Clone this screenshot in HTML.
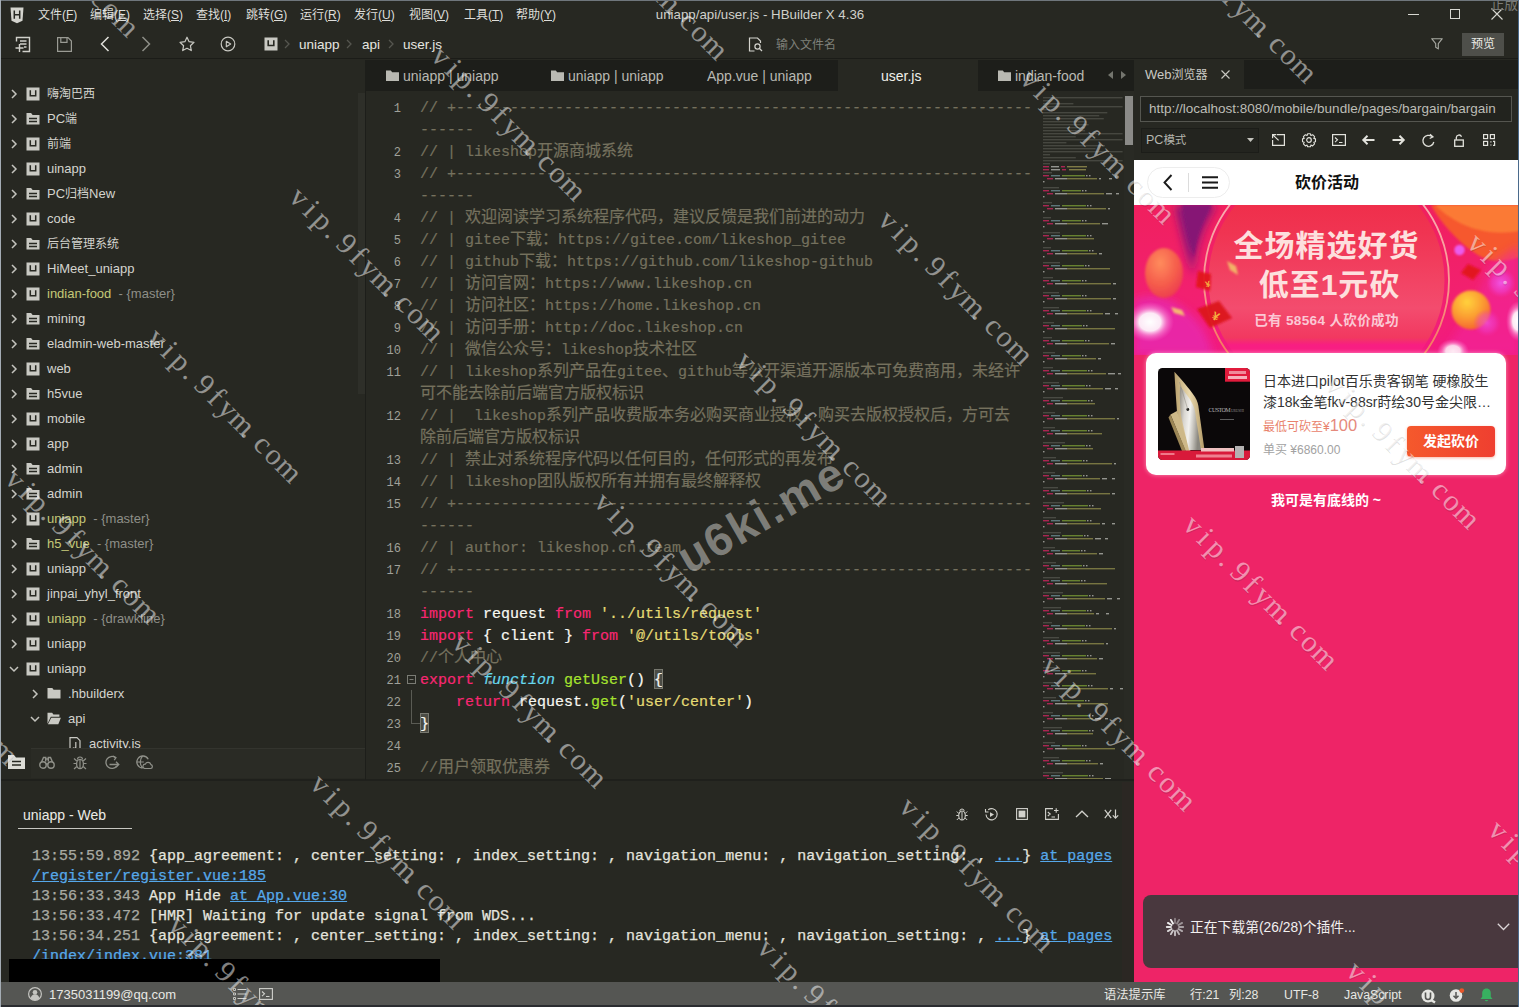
<!DOCTYPE html>
<html lang="zh">
<head>
<meta charset="utf-8">
<title>uniapp/api/user.js - HBuilder X 4.36</title>
<style>
*{box-sizing:border-box;margin:0;padding:0}
html,body{width:1519px;height:1007px;overflow:hidden;background:#272822}
body{position:relative;font-family:"Liberation Sans","Noto Sans CJK SC",sans-serif;font-size:13px;color:#d8d8d2}
.abs{position:absolute}
svg{display:block;overflow:visible}
/* title + toolbar */
#titlebar{left:0;top:0;width:1519px;height:30px;background:#272822}
#toolbar{left:0;top:30px;width:1519px;height:29px;background:#272822;border-bottom:1px solid #1b1c18}
.z{font-size:12px}
.menu{top:7px;font-size:12px;color:#dededa;white-space:nowrap;line-height:16px}
.t{white-space:nowrap;line-height:16px}
/* sidebar */
#sidebar{left:0;top:60px;width:365px;height:688px;background:#272822;overflow:hidden}
.row{position:absolute;left:0;height:25px;width:365px;line-height:25px;white-space:nowrap;color:#d4d4ce;font-size:13px}
.row .lbl{position:absolute;top:0}
.row .g{color:#8e8f88}
.row.y .lbl{color:#c5c878}
#sbbar{left:0;top:748px;width:365px;height:30px;background:#2a2b25;border-top:1px solid #33342e}
/* editor */
#tabbar{left:366px;top:60px;width:768px;height:31px;background:#1d1e1a}
.tab{position:absolute;top:1px;height:31px;line-height:31px;font-size:14px;color:#b9b9b2;white-space:nowrap}
#editor{left:366px;top:91px;width:768px;height:690px;background:#272822;overflow:hidden}
.ln{position:absolute;left:0;width:35px;text-align:right;font:12px/22px "Liberation Mono",monospace;color:#a0a19a}
.cl{position:absolute;left:54px;white-space:pre;font:15px/22px "Liberation Mono","Noto Sans CJK SC",monospace;color:#f8f8f2;-webkit-text-stroke:0.2px}
.cl .c{font-size:16px;font-family:"Noto Sans CJK SC",sans-serif;line-height:0}
.cm{color:#75715e}
.br{background:#4b4c45;outline:1px solid #77786f;outline-offset:-1px;padding:3px 0 0}
.k{color:#f92672}.s{color:#e6db74}.f{color:#a6e22e}.i{color:#66d9ef;font-style:italic}
/* console */
#console{left:0;top:782px;width:1134px;height:200px;background:#272822;overflow:hidden}
.co{position:absolute;left:32px;white-space:pre;font:15px/20px "Liberation Mono",monospace;color:#e4e4de;-webkit-text-stroke:0.25px}
.co .tm{color:#a9aaa3}
.co a{color:#56a8ea;text-decoration:underline}
/* status */
#status{left:0;top:982px;width:1519px;height:25px;background:#555653;color:#e6e6e2;font-size:13px}
.wm{position:absolute;height:40px;line-height:40px;white-space:nowrap;font-family:"Liberation Serif",serif;font-size:30px;color:rgba(255,255,255,0.5);transform-origin:0 50%;transform:rotate(45deg);text-shadow:1px 1px 0 rgba(30,30,30,0.13)}
.wm span{display:inline-block;width:16.6px;text-align:center}
.wm span.d{text-align:left;padding-left:2px}
.wm2{position:absolute;height:50px;line-height:50px;white-space:nowrap;font-family:"Liberation Sans",sans-serif;font-weight:bold;font-size:46px;letter-spacing:2px;color:rgba(165,165,160,0.7);transform-origin:0 50%;transform:rotate(-30deg)}
/* right panel */
#rp{left:1134px;top:60px;width:385px;height:922px;background:#272822}
</style>
</head>
<body>
<div id="titlebar" class="abs">
<span class="abs" style="left:10px;top:6.500px"><svg width="14" height="17" viewBox="0 0 14 17" ><path d="M0.5 0.5h13l-1 13.2-5.5 2.6-5.5-2.6z" fill="#d4d4ce"/><path d="M4.3 3.6v8.2M9.7 3.6v8.2M4.3 7.7h5.4" stroke="#272822" stroke-width="1.5" fill="none"/></svg></span>
<span class="abs menu" style="left:38px">文件(<u>F</u>)</span>
<span class="abs menu" style="left:90px">编辑(<u>E</u>)</span>
<span class="abs menu" style="left:143px">选择(<u>S</u>)</span>
<span class="abs menu" style="left:196px">查找(<u>I</u>)</span>
<span class="abs menu" style="left:246px">跳转(<u>G</u>)</span>
<span class="abs menu" style="left:300px">运行(<u>R</u>)</span>
<span class="abs menu" style="left:354px">发行(<u>U</u>)</span>
<span class="abs menu" style="left:409px">视图(<u>V</u>)</span>
<span class="abs menu" style="left:464px">工具(<u>T</u>)</span>
<span class="abs menu" style="left:516px">帮助(<u>Y</u>)</span>
<span class="abs t" style="left:560px;width:400px;text-align:center;top:7px;font-size:13.300px;color:#d0d0ca">uniapp/api/user.js - HBuilder X 4.36</span>
<span class="abs" style="left:1408px;top:14px;width:11px;height:1px;background:#d8d8d2"></span>
<span class="abs" style="left:1450px;top:9px;width:10px;height:10px;border:1px solid #d8d8d2"></span>
<span class="abs" style="left:1491px;top:8px"><svg width="12" height="12" viewBox="0 0 12 12" ><path d="M0.5 0.5l11 11M11.5 0.5l-11 11" stroke="#d8d8d2" stroke-width="1.1"/></svg></span>
<span class="abs t" style="left:1491px;top:-3px;font-size:13.500px;color:#7a7b76">正版</span>
</div>
<div id="toolbar" class="abs">
<span class="abs" style="left:15px;top:6px"><svg width="16" height="17" viewBox="0 0 16 17" ><path d="M1.5 5.5v-4h13v14h-7" stroke="#d0d0ca" fill="none" stroke-width="1.4"/><path d="M5 5h6.5M5 8h6.5M9 11h2.5" stroke="#d0d0ca" fill="none" stroke-width="1.3"/><path d="M0.5 12h8M4.5 8v8" stroke="#d0d0ca" fill="none" stroke-width="1.4"/></svg></span>
<span class="abs" style="left:57px;top:7px"><svg width="15" height="15" viewBox="0 0 15 15" ><path d="M0.6 0.6h10.4l3.4 3.4v10.4h-13.8z" stroke="#9a9b94" fill="none" stroke-width="1.2"/><path d="M3.8 0.8v4.6h6.2v-4.6" stroke="#9a9b94" fill="none" stroke-width="1.2"/></svg></span>
<span class="abs" style="left:100px;top:6px"><svg width="10" height="16" viewBox="0 0 10 16" ><path d="M8.5 1l-7 7 7 7" stroke="#e0e0da" fill="none" stroke-width="1.5"/></svg></span>
<span class="abs" style="left:141px;top:6px"><svg width="10" height="16" viewBox="0 0 10 16" ><path d="M1.5 1l7 7-7 7" stroke="#8d8e87" fill="none" stroke-width="1.5"/></svg></span>
<span class="abs" style="left:179px;top:6px"><svg width="16" height="16" viewBox="0 0 16 16" ><path d="M8 1.2l2.1 4.5 4.9 0.6-3.6 3.4 0.9 4.9L8 12.2l-4.3 2.4 0.9-4.9L1 6.3l4.9-0.6z" stroke="#c8c8c2" fill="none" stroke-width="1.2" stroke-linejoin="round"/></svg></span>
<span class="abs" style="left:220px;top:6px"><svg width="16" height="16" viewBox="0 0 16 16" ><circle cx="8" cy="8" r="6.8" stroke="#c8c8c2" fill="none" stroke-width="1.2"/><path d="M6.3 5.2l4.4 2.8-4.4 2.8z" stroke="#c8c8c2" fill="none" stroke-width="1.1" stroke-linejoin="round"/></svg></span>
<span class="abs" style="left:264px;top:7px"><svg width="14" height="14" viewBox="0 0 14 14" ><rect x="0.5" y="0.5" width="13" height="13" fill="#c9c9c3"/><path d="M4.2 3.2v5.3h5.6V3.2" fill="none" stroke="#272822" stroke-width="1.6"/></svg></span>
<span class="abs" style="left:284px;top:9px"><svg width="6" height="10" viewBox="0 0 6 10" ><path d="M1 1l4 4-4 4" stroke="#55564f" fill="none" stroke-width="1.3"/></svg></span>
<span class="abs" style="left:346px;top:9px"><svg width="6" height="10" viewBox="0 0 6 10" ><path d="M1 1l4 4-4 4" stroke="#55564f" fill="none" stroke-width="1.3"/></svg></span>
<span class="abs" style="left:388px;top:9px"><svg width="6" height="10" viewBox="0 0 6 10" ><path d="M1 1l4 4-4 4" stroke="#55564f" fill="none" stroke-width="1.3"/></svg></span>
<span class="abs t" style="left:299px;top:7px;font-size:13.5px;color:#e6e6e0">uniapp</span>
<span class="abs t" style="left:362px;top:7px;font-size:13.5px;color:#e6e6e0">api</span>
<span class="abs t" style="left:403px;top:7px;font-size:13.5px;color:#e6e6e0">user.js</span>
<span class="abs" style="left:748px;top:7px"><svg width="15" height="15" viewBox="0 0 15 15" ><path d="M12.5 6V4l-3-3h-8v13h5" stroke="#d4d4ce" fill="none" stroke-width="1.2"/><circle cx="9.5" cy="9.5" r="2.6" stroke="#d4d4ce" fill="none" stroke-width="1.2"/><path d="M11.5 11.5l2.5 2.5" stroke="#d4d4ce" stroke-width="1.3"/></svg></span>
<span class="abs t" style="left:776px;top:7px;font-size:12px;color:#7f807a">输入文件名</span>
<span class="abs" style="left:1431px;top:8px"><svg width="12" height="13" viewBox="0 0 12 13" ><path d="M0.7 0.7h10.6l-4 5v5.2l-2.6-1.6v-3.6z" stroke="#a9aaa3" fill="none" stroke-width="1.1" stroke-linejoin="round"/></svg></span>
<span class="abs t" style="left:1462px;top:3px;width:42px;height:23px;line-height:23px;background:#4e4f4a;color:#ececE6;font-size:12px;text-align:center">预览</span>
</div>
<div id="sidebar" class="abs">
<div class="row" style="top:21px"><span class="abs" style="left:10px;top:8px"><svg width="8" height="10" viewBox="0 0 8 10" ><path d="M2 1l4 4-4 4" fill="none" stroke="#c4c4be" stroke-width="1.5"/></svg></span><span class="abs" style="left:26px;top:6px"><svg width="14" height="14" viewBox="0 0 14 14" ><rect x="0.5" y="0.5" width="13" height="13" fill="#c9c9c3"/><path d="M4.300 3.200v5.500h5.400V3.200" fill="none" stroke="#272822" stroke-width="1.500"/></svg></span><span class="lbl" style="left:47px"><span class="z">嗨淘巴西</span></span></div>
<div class="row" style="top:46px"><span class="abs" style="left:10px;top:8px"><svg width="8" height="10" viewBox="0 0 8 10" ><path d="M2 1l4 4-4 4" fill="none" stroke="#c4c4be" stroke-width="1.5"/></svg></span><span class="abs" style="left:26px;top:6px"><svg width="14" height="13" viewBox="0 0 14 13" ><path d="M0.5 1h4.6l1.5 2h6.9v9.5h-13z" fill="#c9c9c3"/><path d="M3 6.4h8M3 9.4h8" stroke="#272822" stroke-width="1.5"/></svg></span><span class="lbl" style="left:47px">PC<span class="z">端</span></span></div>
<div class="row" style="top:71px"><span class="abs" style="left:10px;top:8px"><svg width="8" height="10" viewBox="0 0 8 10" ><path d="M2 1l4 4-4 4" fill="none" stroke="#c4c4be" stroke-width="1.5"/></svg></span><span class="abs" style="left:26px;top:6px"><svg width="14" height="14" viewBox="0 0 14 14" ><rect x="0.5" y="0.5" width="13" height="13" fill="#c9c9c3"/><path d="M4.300 3.200v5.500h5.400V3.200" fill="none" stroke="#272822" stroke-width="1.500"/></svg></span><span class="lbl" style="left:47px"><span class="z">前端</span></span></div>
<div class="row" style="top:96px"><span class="abs" style="left:10px;top:8px"><svg width="8" height="10" viewBox="0 0 8 10" ><path d="M2 1l4 4-4 4" fill="none" stroke="#c4c4be" stroke-width="1.5"/></svg></span><span class="abs" style="left:26px;top:6px"><svg width="14" height="14" viewBox="0 0 14 14" ><rect x="0.5" y="0.5" width="13" height="13" fill="#c9c9c3"/><path d="M4.300 3.200v5.500h5.400V3.200" fill="none" stroke="#272822" stroke-width="1.500"/></svg></span><span class="lbl" style="left:47px">uinapp</span></div>
<div class="row" style="top:121px"><span class="abs" style="left:10px;top:8px"><svg width="8" height="10" viewBox="0 0 8 10" ><path d="M2 1l4 4-4 4" fill="none" stroke="#c4c4be" stroke-width="1.5"/></svg></span><span class="abs" style="left:26px;top:6px"><svg width="14" height="13" viewBox="0 0 14 13" ><path d="M0.5 1h4.6l1.5 2h6.9v9.5h-13z" fill="#c9c9c3"/><path d="M3 6.4h8M3 9.4h8" stroke="#272822" stroke-width="1.5"/></svg></span><span class="lbl" style="left:47px">PC<span class="z">归档</span>New</span></div>
<div class="row" style="top:146px"><span class="abs" style="left:10px;top:8px"><svg width="8" height="10" viewBox="0 0 8 10" ><path d="M2 1l4 4-4 4" fill="none" stroke="#c4c4be" stroke-width="1.5"/></svg></span><span class="abs" style="left:26px;top:6px"><svg width="14" height="14" viewBox="0 0 14 14" ><rect x="0.5" y="0.5" width="13" height="13" fill="#c9c9c3"/><path d="M4.300 3.200v5.500h5.400V3.200" fill="none" stroke="#272822" stroke-width="1.500"/></svg></span><span class="lbl" style="left:47px">code</span></div>
<div class="row" style="top:171px"><span class="abs" style="left:10px;top:8px"><svg width="8" height="10" viewBox="0 0 8 10" ><path d="M2 1l4 4-4 4" fill="none" stroke="#c4c4be" stroke-width="1.5"/></svg></span><span class="abs" style="left:26px;top:6px"><svg width="14" height="13" viewBox="0 0 14 13" ><path d="M0.5 1h4.6l1.5 2h6.9v9.5h-13z" fill="#c9c9c3"/><path d="M3 6.4h8M3 9.4h8" stroke="#272822" stroke-width="1.5"/></svg></span><span class="lbl" style="left:47px"><span class="z">后台管理系统</span></span></div>
<div class="row" style="top:196px"><span class="abs" style="left:10px;top:8px"><svg width="8" height="10" viewBox="0 0 8 10" ><path d="M2 1l4 4-4 4" fill="none" stroke="#c4c4be" stroke-width="1.5"/></svg></span><span class="abs" style="left:26px;top:6px"><svg width="14" height="14" viewBox="0 0 14 14" ><rect x="0.5" y="0.5" width="13" height="13" fill="#c9c9c3"/><path d="M4.300 3.200v5.500h5.400V3.200" fill="none" stroke="#272822" stroke-width="1.500"/></svg></span><span class="lbl" style="left:47px">HiMeet_uniapp</span></div>
<div class="row y" style="top:221px"><span class="abs" style="left:10px;top:8px"><svg width="8" height="10" viewBox="0 0 8 10" ><path d="M2 1l4 4-4 4" fill="none" stroke="#c4c4be" stroke-width="1.5"/></svg></span><span class="abs" style="left:26px;top:6px"><svg width="14" height="14" viewBox="0 0 14 14" ><rect x="0.5" y="0.5" width="13" height="13" fill="#c9c9c3"/><path d="M4.300 3.200v5.500h5.400V3.200" fill="none" stroke="#272822" stroke-width="1.500"/></svg></span><span class="lbl" style="left:47px">indian-food<span class="g">&nbsp; - {master}</span></span></div>
<div class="row" style="top:246px"><span class="abs" style="left:10px;top:8px"><svg width="8" height="10" viewBox="0 0 8 10" ><path d="M2 1l4 4-4 4" fill="none" stroke="#c4c4be" stroke-width="1.5"/></svg></span><span class="abs" style="left:26px;top:6px"><svg width="14" height="13" viewBox="0 0 14 13" ><path d="M0.5 1h4.6l1.5 2h6.9v9.5h-13z" fill="#c9c9c3"/><path d="M3 6.4h8M3 9.4h8" stroke="#272822" stroke-width="1.5"/></svg></span><span class="lbl" style="left:47px">mining</span></div>
<div class="row" style="top:271px"><span class="abs" style="left:10px;top:8px"><svg width="8" height="10" viewBox="0 0 8 10" ><path d="M2 1l4 4-4 4" fill="none" stroke="#c4c4be" stroke-width="1.5"/></svg></span><span class="abs" style="left:26px;top:6px"><svg width="14" height="13" viewBox="0 0 14 13" ><path d="M0.5 1h4.6l1.5 2h6.9v9.5h-13z" fill="#c9c9c3"/><path d="M3 6.4h8M3 9.4h8" stroke="#272822" stroke-width="1.5"/></svg></span><span class="lbl" style="left:47px">eladmin-web-master</span></div>
<div class="row" style="top:296px"><span class="abs" style="left:10px;top:8px"><svg width="8" height="10" viewBox="0 0 8 10" ><path d="M2 1l4 4-4 4" fill="none" stroke="#c4c4be" stroke-width="1.5"/></svg></span><span class="abs" style="left:26px;top:6px"><svg width="14" height="14" viewBox="0 0 14 14" ><rect x="0.5" y="0.5" width="13" height="13" fill="#c9c9c3"/><path d="M4.300 3.200v5.500h5.400V3.200" fill="none" stroke="#272822" stroke-width="1.500"/></svg></span><span class="lbl" style="left:47px">web</span></div>
<div class="row" style="top:321px"><span class="abs" style="left:10px;top:8px"><svg width="8" height="10" viewBox="0 0 8 10" ><path d="M2 1l4 4-4 4" fill="none" stroke="#c4c4be" stroke-width="1.5"/></svg></span><span class="abs" style="left:26px;top:6px"><svg width="14" height="13" viewBox="0 0 14 13" ><path d="M0.5 1h4.6l1.5 2h6.9v9.5h-13z" fill="#c9c9c3"/><path d="M3 6.4h8M3 9.4h8" stroke="#272822" stroke-width="1.5"/></svg></span><span class="lbl" style="left:47px">h5vue</span></div>
<div class="row" style="top:346px"><span class="abs" style="left:10px;top:8px"><svg width="8" height="10" viewBox="0 0 8 10" ><path d="M2 1l4 4-4 4" fill="none" stroke="#c4c4be" stroke-width="1.5"/></svg></span><span class="abs" style="left:26px;top:6px"><svg width="14" height="14" viewBox="0 0 14 14" ><rect x="0.5" y="0.5" width="13" height="13" fill="#c9c9c3"/><path d="M4.300 3.200v5.500h5.400V3.200" fill="none" stroke="#272822" stroke-width="1.500"/></svg></span><span class="lbl" style="left:47px">mobile</span></div>
<div class="row" style="top:371px"><span class="abs" style="left:10px;top:8px"><svg width="8" height="10" viewBox="0 0 8 10" ><path d="M2 1l4 4-4 4" fill="none" stroke="#c4c4be" stroke-width="1.5"/></svg></span><span class="abs" style="left:26px;top:6px"><svg width="14" height="14" viewBox="0 0 14 14" ><rect x="0.5" y="0.5" width="13" height="13" fill="#c9c9c3"/><path d="M4.300 3.200v5.500h5.400V3.200" fill="none" stroke="#272822" stroke-width="1.500"/></svg></span><span class="lbl" style="left:47px">app</span></div>
<div class="row" style="top:396px"><span class="abs" style="left:10px;top:8px"><svg width="8" height="10" viewBox="0 0 8 10" ><path d="M2 1l4 4-4 4" fill="none" stroke="#c4c4be" stroke-width="1.5"/></svg></span><span class="abs" style="left:26px;top:6px"><svg width="14" height="13" viewBox="0 0 14 13" ><path d="M0.5 1h4.6l1.5 2h6.9v9.5h-13z" fill="#c9c9c3"/><path d="M3 6.4h8M3 9.4h8" stroke="#272822" stroke-width="1.5"/></svg></span><span class="lbl" style="left:47px">admin</span></div>
<div class="row" style="top:421px"><span class="abs" style="left:10px;top:8px"><svg width="8" height="10" viewBox="0 0 8 10" ><path d="M2 1l4 4-4 4" fill="none" stroke="#c4c4be" stroke-width="1.5"/></svg></span><span class="abs" style="left:26px;top:6px"><svg width="14" height="13" viewBox="0 0 14 13" ><path d="M0.5 1h4.6l1.5 2h6.9v9.5h-13z" fill="#c9c9c3"/><path d="M3 6.4h8M3 9.4h8" stroke="#272822" stroke-width="1.5"/></svg></span><span class="lbl" style="left:47px">admin</span></div>
<div class="row y" style="top:446px"><span class="abs" style="left:10px;top:8px"><svg width="8" height="10" viewBox="0 0 8 10" ><path d="M2 1l4 4-4 4" fill="none" stroke="#c4c4be" stroke-width="1.5"/></svg></span><span class="abs" style="left:26px;top:6px"><svg width="14" height="14" viewBox="0 0 14 14" ><rect x="0.5" y="0.5" width="13" height="13" fill="#c9c9c3"/><path d="M4.300 3.200v5.500h5.400V3.200" fill="none" stroke="#272822" stroke-width="1.500"/></svg></span><span class="lbl" style="left:47px">uniapp<span class="g">&nbsp; - {master}</span></span></div>
<div class="row y" style="top:471px"><span class="abs" style="left:10px;top:8px"><svg width="8" height="10" viewBox="0 0 8 10" ><path d="M2 1l4 4-4 4" fill="none" stroke="#c4c4be" stroke-width="1.5"/></svg></span><span class="abs" style="left:26px;top:6px"><svg width="14" height="13" viewBox="0 0 14 13" ><path d="M0.5 1h4.6l1.5 2h6.9v9.5h-13z" fill="#c9c9c3"/><path d="M3 6.4h8M3 9.4h8" stroke="#272822" stroke-width="1.5"/></svg></span><span class="lbl" style="left:47px">h5_vue<span class="g">&nbsp; - {master}</span></span></div>
<div class="row" style="top:496px"><span class="abs" style="left:10px;top:8px"><svg width="8" height="10" viewBox="0 0 8 10" ><path d="M2 1l4 4-4 4" fill="none" stroke="#c4c4be" stroke-width="1.5"/></svg></span><span class="abs" style="left:26px;top:6px"><svg width="14" height="14" viewBox="0 0 14 14" ><rect x="0.5" y="0.5" width="13" height="13" fill="#c9c9c3"/><path d="M4.300 3.200v5.500h5.400V3.200" fill="none" stroke="#272822" stroke-width="1.500"/></svg></span><span class="lbl" style="left:47px">uniapp</span></div>
<div class="row" style="top:521px"><span class="abs" style="left:10px;top:8px"><svg width="8" height="10" viewBox="0 0 8 10" ><path d="M2 1l4 4-4 4" fill="none" stroke="#c4c4be" stroke-width="1.5"/></svg></span><span class="abs" style="left:26px;top:6px"><svg width="14" height="14" viewBox="0 0 14 14" ><rect x="0.5" y="0.5" width="13" height="13" fill="#c9c9c3"/><path d="M4.300 3.200v5.500h5.400V3.200" fill="none" stroke="#272822" stroke-width="1.500"/></svg></span><span class="lbl" style="left:47px">jinpai_yhyl_front</span></div>
<div class="row y" style="top:546px"><span class="abs" style="left:10px;top:8px"><svg width="8" height="10" viewBox="0 0 8 10" ><path d="M2 1l4 4-4 4" fill="none" stroke="#c4c4be" stroke-width="1.5"/></svg></span><span class="abs" style="left:26px;top:6px"><svg width="14" height="14" viewBox="0 0 14 14" ><rect x="0.5" y="0.5" width="13" height="13" fill="#c9c9c3"/><path d="M4.300 3.200v5.500h5.400V3.200" fill="none" stroke="#272822" stroke-width="1.500"/></svg></span><span class="lbl" style="left:47px">uniapp<span class="g">&nbsp; - {drawkline}</span></span></div>
<div class="row" style="top:571px"><span class="abs" style="left:10px;top:8px"><svg width="8" height="10" viewBox="0 0 8 10" ><path d="M2 1l4 4-4 4" fill="none" stroke="#c4c4be" stroke-width="1.5"/></svg></span><span class="abs" style="left:26px;top:6px"><svg width="14" height="14" viewBox="0 0 14 14" ><rect x="0.5" y="0.5" width="13" height="13" fill="#c9c9c3"/><path d="M4.300 3.200v5.500h5.400V3.200" fill="none" stroke="#272822" stroke-width="1.500"/></svg></span><span class="lbl" style="left:47px">uniapp</span></div>
<div class="row" style="top:596px"><span class="abs" style="left:9px;top:9px"><svg width="10" height="8" viewBox="0 0 10 8" ><path d="M1 2l4 4 4-4" fill="none" stroke="#c4c4be" stroke-width="1.5"/></svg></span><span class="abs" style="left:26px;top:6px"><svg width="14" height="14" viewBox="0 0 14 14" ><rect x="0.5" y="0.5" width="13" height="13" fill="#c9c9c3"/><path d="M4.300 3.200v5.500h5.400V3.200" fill="none" stroke="#272822" stroke-width="1.500"/></svg></span><span class="lbl" style="left:47px">uniapp</span></div>
<div class="row" style="top:621px"><span class="abs" style="left:31px;top:8px"><svg width="8" height="10" viewBox="0 0 8 10" ><path d="M2 1l4 4-4 4" fill="none" stroke="#c4c4be" stroke-width="1.5"/></svg></span><span class="abs" style="left:47px;top:6px"><svg width="14" height="12" viewBox="0 0 14 12" ><path d="M0.5 1h4.800l1.300 1.800h6.900v8.700h-13z" fill="#c9c9c3"/></svg></span><span class="lbl" style="left:68px">.hbuilderx</span></div>
<div class="row" style="top:646px"><span class="abs" style="left:30px;top:9px"><svg width="10" height="8" viewBox="0 0 10 8" ><path d="M1 2l4 4 4-4" fill="none" stroke="#c4c4be" stroke-width="1.5"/></svg></span><span class="abs" style="left:47px;top:6px"><svg width="14" height="13" viewBox="0 0 14 13" ><path d="M0.5 0.800h4.600l1.300 1.800h6v2.200h-8.600l-3.300 7z" fill="#c9c9c3"/><path d="M4.300 5.800h9.600l-2.600 6.500h-10.400z" fill="#c9c9c3"/></svg></span><span class="lbl" style="left:68px">api</span></div>
<div class="row" style="top:671px"><span class="abs" style="left:69px;top:6px"><svg width="12" height="14" viewBox="0 0 12 14" ><path d="M1 0.7h7l3 3v9.6h-10z" fill="none" stroke="#c9c9c3" stroke-width="1.2"/><path d="M6.8 5v5.2c0 1.4-2.2 1.4-2.6 0.3" fill="none" stroke="#c9c9c3" stroke-width="1.2"/></svg></span><span class="lbl" style="left:89px">activity.js</span></div>
<div class="abs" style="left:358px;top:33px;width:7px;height:301px;background:#2e2f29"></div>
</div>
<div id="sbbar" class="abs">
<div class="abs" style="left:0;top:-1px;width:31px;height:31px;background:#272822"></div>
<span class="abs" style="left:8px;top:6px"><svg width="17" height="14" viewBox="0 0 17 14" ><path d="M0 0h6l2 2.5h9V14H0z" fill="#dcdcd6"/><path d="M4 6.5h9M4 10h9" stroke="#272822" stroke-width="1.6"/></svg></span>
<span class="abs" style="left:39px;top:7px"><svg width="16" height="13" viewBox="0 0 16 13" ><circle cx="4" cy="9" r="3.2" fill="none" stroke="#8f9089" stroke-width="1.4"/><circle cx="12" cy="9" r="3.2" fill="none" stroke="#8f9089" stroke-width="1.4"/><path d="M2.5 6l2-4.5h2.2v4M13.5 6l-2-4.5H9.3v4M6.5 3h3M6.8 8h2.4" fill="none" stroke="#8f9089" stroke-width="1.4"/></svg></span>
<span class="abs" style="left:73px;top:6px"><svg width="14" height="15" viewBox="0 0 14 15" ><ellipse cx="7" cy="9" rx="3.4" ry="4.6" fill="none" stroke="#8f9089" stroke-width="1.3"/><path d="M7 5v8M4.5 4.5a2.5 2.5 0 015 0M0.5 8.5h3M10.5 8.5h3M1 3.5l2.8 2.5M13 3.5l-2.8 2.5M1 14l2.8-2.5M13 14l-2.8-2.5" fill="none" stroke="#8f9089" stroke-width="1.2"/></svg></span>
<span class="abs" style="left:104px;top:6px"><svg width="16" height="15" viewBox="0 0 16 15" ><path d="M11.5 2.6A6 6 0 1 0 12.8 11" fill="none" stroke="#8f9089" stroke-width="1.3"/><path d="M9 1l3 1.6-1.8 2.6" fill="none" stroke="#8f9089" stroke-width="1.2"/><path d="M5.5 9.5h9M12 6.8l2.8 2.7-2.8 2.7" fill="none" stroke="#8f9089" stroke-width="1.3"/></svg></span>
<span class="abs" style="left:136px;top:6px"><svg width="17" height="15" viewBox="0 0 17 15" ><path d="M12.2 4.2A6 6 0 1 0 6.5 13" fill="none" stroke="#8f9089" stroke-width="1.3"/><path d="M6.5 1c-3 3.5-3 8.500 0 12M0.8 7h7" fill="none" stroke="#8f9089" stroke-width="1.2"/><path d="M8.500 13.500h6.200a2 2 0 0 0 0.200-3.900a3 3 0 0 0-5.600-0.400a2.200 2.200 0 0 0-0.800 4.300z" fill="#2a2b25" stroke="#8f9089" stroke-width="1.2"/></svg></span>
</div>
<div id="tabbar" class="abs">
<div class="abs" style="left:472px;top:0;width:140px;height:31px;background:#272822"></div>
<span class="abs" style="left:20px;top:10px"><svg width="13" height="11" viewBox="0 0 13 11" ><path d="M0 0.5h4.8l1.4 1.8h6.8v8.7h-13z" fill="#b9b9b2"/></svg></span><span class="tab" style="left:37px;color:#b9b9b2">uniapp | uniapp</span>
<span class="abs" style="left:185px;top:10px"><svg width="13" height="11" viewBox="0 0 13 11" ><path d="M0 0.5h4.8l1.4 1.8h6.8v8.7h-13z" fill="#b9b9b2"/></svg></span><span class="tab" style="left:202px;color:#b9b9b2">uniapp | uniapp</span>
<span class="tab" style="left:341px;color:#b9b9b2">App.vue | uniapp</span>
<span class="tab" style="left:515px;color:#f0f0ea">user.js</span>
<span class="abs" style="left:632px;top:10px"><svg width="13" height="11" viewBox="0 0 13 11" ><path d="M0 0.5h4.8l1.4 1.8h6.8v8.7h-13z" fill="#b9b9b2"/></svg></span><span class="tab" style="left:649px;color:#b9b9b2">indian-food</span>
<span class="abs" style="left:742px;top:11px"><svg width="5" height="8" viewBox="0 0 5 8" ><path d="M5 0v8L0 4z" fill="#74756e"/></svg></span>
<span class="abs" style="left:755px;top:11px"><svg width="5" height="8" viewBox="0 0 5 8" ><path d="M0 0v8l5-4z" fill="#74756e"/></svg></span>
</div>
<div id="editor" class="abs">
<div class="ln" style="top:7px">1</div>
<div class="cl" style="top:7px"><span class="cm">// +----------------------------------------------------------------</span></div>
<div class="cl" style="top:29px"><span class="cm">------</span></div>
<div class="ln" style="top:51px">2</div>
<div class="cl" style="top:51px"><span class="cm">// | likeshop<span class="c">开源商城系统</span></span></div>
<div class="ln" style="top:73px">3</div>
<div class="cl" style="top:73px"><span class="cm">// +----------------------------------------------------------------</span></div>
<div class="cl" style="top:95px"><span class="cm">------</span></div>
<div class="ln" style="top:117px">4</div>
<div class="cl" style="top:117px"><span class="cm">// | <span class="c">欢迎阅读学习系统程序代码，建议反馈是我们前进的动力</span></span></div>
<div class="ln" style="top:139px">5</div>
<div class="cl" style="top:139px"><span class="cm">// | gitee<span class="c">下载：</span>https://gitee.com/likeshop_gitee</span></div>
<div class="ln" style="top:161px">6</div>
<div class="cl" style="top:161px"><span class="cm">// | github<span class="c">下载：</span>https://github.com/likeshop-github</span></div>
<div class="ln" style="top:183px">7</div>
<div class="cl" style="top:183px"><span class="cm">// | <span class="c">访问官网：</span>https://www.likeshop.cn</span></div>
<div class="ln" style="top:205px">8</div>
<div class="cl" style="top:205px"><span class="cm">// | <span class="c">访问社区：</span>https://home.likeshop.cn</span></div>
<div class="ln" style="top:227px">9</div>
<div class="cl" style="top:227px"><span class="cm">// | <span class="c">访问手册：</span>http://doc.likeshop.cn</span></div>
<div class="ln" style="top:249px">10</div>
<div class="cl" style="top:249px"><span class="cm">// | <span class="c">微信公众号：</span>likeshop<span class="c">技术社区</span></span></div>
<div class="ln" style="top:271px">11</div>
<div class="cl" style="top:271px"><span class="cm">// | likeshop<span class="c">系列产品在</span>gitee<span class="c">、</span>github<span class="c">等公开渠道开源版本可免费商用，未经许</span></span></div>
<div class="cl" style="top:293px"><span class="cm"><span class="c">可不能去除前后端官方版权标识</span></span></div>
<div class="ln" style="top:315px">12</div>
<div class="cl" style="top:315px"><span class="cm">// |  likeshop<span class="c">系列产品收费版本务必购买商业授权，购买去版权授权后，方可去</span></span></div>
<div class="cl" style="top:337px"><span class="cm"><span class="c">除前后端官方版权标识</span></span></div>
<div class="ln" style="top:359px">13</div>
<div class="cl" style="top:359px"><span class="cm">// | <span class="c">禁止对系统程序代码以任何目的，任何形式的再发布</span></span></div>
<div class="ln" style="top:381px">14</div>
<div class="cl" style="top:381px"><span class="cm">// | likeshop<span class="c">团队版权所有并拥有最终解释权</span></span></div>
<div class="ln" style="top:403px">15</div>
<div class="cl" style="top:403px"><span class="cm">// +----------------------------------------------------------------</span></div>
<div class="cl" style="top:425px"><span class="cm">------</span></div>
<div class="ln" style="top:447px">16</div>
<div class="cl" style="top:447px"><span class="cm">// | author: likeshop.cn.team</span></div>
<div class="ln" style="top:469px">17</div>
<div class="cl" style="top:469px"><span class="cm">// +----------------------------------------------------------------</span></div>
<div class="cl" style="top:491px"><span class="cm">------</span></div>
<div class="ln" style="top:513px">18</div>
<div class="cl" style="top:513px"><span class="k">import</span> request <span class="k">from</span> <span class="s">'../utils/request'</span></div>
<div class="ln" style="top:535px">19</div>
<div class="cl" style="top:535px"><span class="k">import</span> { client } <span class="k">from</span> <span class="s">'@/utils/tools'</span></div>
<div class="ln" style="top:557px">20</div>
<div class="cl" style="top:557px"><span class="cm">//<span class="c">个人中心</span></span></div>
<div class="ln" style="top:579px">21</div>
<div class="cl" style="top:579px"><span class="k">export</span> <span class="i">function</span> <span class="f">getUser</span>() <span class="br">{</span></div>
<div class="ln" style="top:601px">22</div>
<div class="cl" style="top:601px">    <span class="k">return</span> request.<span class="f">get</span>(<span class="s">'user/center'</span>)</div>
<div class="ln" style="top:623px">23</div>
<div class="cl" style="top:623px"><span class="br">}</span></div>
<div class="ln" style="top:645px">24</div>
<div class="cl" style="top:645px"></div>
<div class="ln" style="top:667px">25</div>
<div class="cl" style="top:667px"><span class="cm">//<span class="c">用户领取优惠券</span></span></div>
<svg class="abs" style="left:677px;top:6px;overflow:hidden;opacity:0.62" width="80" height="684" viewBox="0 0 80 684"><rect x="0.0" y="0" width="79.6" height="1.400" fill="#5e5f58" opacity="0.9"/><rect x="0.0" y="3" width="7.0" height="1.400" fill="#5e5f58" opacity="0.9"/><rect x="0.0" y="6" width="30.4" height="1.400" fill="#5e5f58" opacity="0.9"/><rect x="0.0" y="9" width="79.6" height="1.400" fill="#5e5f58" opacity="0.9"/><rect x="0.0" y="12" width="7.0" height="1.400" fill="#5e5f58" opacity="0.9"/><rect x="0.0" y="15" width="64.3" height="1.400" fill="#5e5f58" opacity="0.9"/><rect x="0.0" y="18" width="56.2" height="1.400" fill="#5e5f58" opacity="0.9"/><rect x="0.0" y="21" width="60.8" height="1.400" fill="#5e5f58" opacity="0.9"/><rect x="0.0" y="24" width="43.3" height="1.400" fill="#5e5f58" opacity="0.9"/><rect x="0.0" y="27" width="45.6" height="1.400" fill="#5e5f58" opacity="0.9"/><rect x="0.0" y="30" width="42.1" height="1.400" fill="#5e5f58" opacity="0.9"/><rect x="0.0" y="33" width="42.1" height="1.400" fill="#5e5f58" opacity="0.9"/><rect x="0.0" y="36" width="79.6" height="1.400" fill="#5e5f58" opacity="0.9"/><rect x="0.0" y="39" width="32.8" height="1.400" fill="#5e5f58" opacity="0.9"/><rect x="0.0" y="42" width="79.6" height="1.400" fill="#5e5f58" opacity="0.9"/><rect x="0.0" y="45" width="23.4" height="1.400" fill="#5e5f58" opacity="0.9"/><rect x="0.0" y="48" width="62.0" height="1.400" fill="#5e5f58" opacity="0.9"/><rect x="0.0" y="51" width="52.6" height="1.400" fill="#5e5f58" opacity="0.9"/><rect x="0.0" y="54" width="79.6" height="1.400" fill="#5e5f58" opacity="0.9"/><rect x="0.0" y="57" width="7.0" height="1.400" fill="#5e5f58" opacity="0.9"/><rect x="0.0" y="60" width="32.8" height="1.400" fill="#5e5f58" opacity="0.9"/><rect x="0.0" y="63" width="79.6" height="1.400" fill="#5e5f58" opacity="0.9"/><rect x="0.0" y="66" width="7.0" height="1.400" fill="#5e5f58" opacity="0.9"/><rect x="0.0" y="69" width="6.0" height="1.400" fill="#f92672" opacity="1"/><rect x="8.0" y="69" width="8.0" height="1.400" fill="#d8d8d2" opacity="1"/><rect x="18.0" y="69" width="4.0" height="1.400" fill="#f92672" opacity="1"/><rect x="24.0" y="69" width="20.0" height="1.400" fill="#b5ad5c" opacity="1"/><rect x="0.0" y="72" width="6.0" height="1.400" fill="#f92672" opacity="1"/><rect x="8.0" y="72" width="9.0" height="1.400" fill="#d8d8d2" opacity="1"/><rect x="19.0" y="72" width="4.0" height="1.400" fill="#f92672" opacity="1"/><rect x="26.0" y="72" width="17.0" height="1.400" fill="#b5ad5c" opacity="1"/><rect x="0.0" y="75" width="9.0" height="1.400" fill="#5e5f58" opacity="1"/><rect x="0.0" y="78" width="6.0" height="1.400" fill="#f92672" opacity="1"/><rect x="8.0" y="78" width="9.0" height="1.400" fill="#7fa6b0" opacity="1"/><rect x="19.0" y="78" width="23.0" height="1.400" fill="#8fb83a" opacity="1"/><rect x="43.0" y="78" width="1.5" height="1.400" fill="#d8d8d2" opacity="1"/><rect x="46.0" y="78" width="1.5" height="1.400" fill="#d8d8d2" opacity="1"/><rect x="4.0" y="81" width="6.0" height="1.400" fill="#f92672" opacity="1"/><rect x="12.0" y="81" width="12.0" height="1.400" fill="#d8d8d2" opacity="1"/><rect x="24.0" y="81" width="30.0" height="1.400" fill="#a9a455" opacity="1"/><rect x="56.0" y="81" width="2.0" height="1.400" fill="#d8d8d2" opacity="1"/><rect x="66.0" y="81" width="3.0" height="1.400" fill="#d8d8d2" opacity="1"/><rect x="0.0" y="84" width="1.5" height="1.400" fill="#d8d8d2" opacity="1"/><rect x="0.0" y="90" width="16.0" height="1.400" fill="#5e5f58" opacity="1"/><rect x="0.0" y="93" width="6.0" height="1.400" fill="#f92672" opacity="1"/><rect x="8.0" y="93" width="9.0" height="1.400" fill="#7fa6b0" opacity="1"/><rect x="19.0" y="93" width="19.0" height="1.400" fill="#8fb83a" opacity="1"/><rect x="39.0" y="93" width="1.5" height="1.400" fill="#d8d8d2" opacity="1"/><rect x="42.0" y="93" width="1.5" height="1.400" fill="#d8d8d2" opacity="1"/><rect x="4.0" y="96" width="6.0" height="1.400" fill="#f92672" opacity="1"/><rect x="12.0" y="96" width="12.0" height="1.400" fill="#d8d8d2" opacity="1"/><rect x="24.0" y="96" width="37.0" height="1.400" fill="#a9a455" opacity="1"/><rect x="63.0" y="96" width="6.0" height="1.400" fill="#d8d8d2" opacity="1"/><rect x="73.0" y="96" width="3.0" height="1.400" fill="#d8d8d2" opacity="1"/><rect x="0.0" y="99" width="1.5" height="1.400" fill="#d8d8d2" opacity="1"/><rect x="0.0" y="105" width="9.0" height="1.400" fill="#5e5f58" opacity="1"/><rect x="0.0" y="108" width="6.0" height="1.400" fill="#f92672" opacity="1"/><rect x="8.0" y="108" width="9.0" height="1.400" fill="#7fa6b0" opacity="1"/><rect x="19.0" y="108" width="24.0" height="1.400" fill="#8fb83a" opacity="1"/><rect x="44.0" y="108" width="1.5" height="1.400" fill="#d8d8d2" opacity="1"/><rect x="47.0" y="108" width="1.5" height="1.400" fill="#d8d8d2" opacity="1"/><rect x="4.0" y="111" width="6.0" height="1.400" fill="#f92672" opacity="1"/><rect x="12.0" y="111" width="12.0" height="1.400" fill="#d8d8d2" opacity="1"/><rect x="24.0" y="111" width="39.0" height="1.400" fill="#a9a455" opacity="1"/><rect x="65.0" y="111" width="2.0" height="1.400" fill="#d8d8d2" opacity="1"/><rect x="0.0" y="114" width="1.5" height="1.400" fill="#d8d8d2" opacity="1"/><rect x="0.0" y="120" width="8.0" height="1.400" fill="#5e5f58" opacity="1"/><rect x="0.0" y="123" width="6.0" height="1.400" fill="#f92672" opacity="1"/><rect x="8.0" y="123" width="9.0" height="1.400" fill="#7fa6b0" opacity="1"/><rect x="19.0" y="123" width="19.0" height="1.400" fill="#8fb83a" opacity="1"/><rect x="39.0" y="123" width="1.5" height="1.400" fill="#d8d8d2" opacity="1"/><rect x="42.0" y="123" width="1.5" height="1.400" fill="#d8d8d2" opacity="1"/><rect x="4.0" y="126" width="6.0" height="1.400" fill="#f92672" opacity="1"/><rect x="12.0" y="126" width="12.0" height="1.400" fill="#d8d8d2" opacity="1"/><rect x="24.0" y="126" width="33.0" height="1.400" fill="#a9a455" opacity="1"/><rect x="59.0" y="126" width="6.0" height="1.400" fill="#d8d8d2" opacity="1"/><rect x="0.0" y="129" width="1.5" height="1.400" fill="#d8d8d2" opacity="1"/><rect x="0.0" y="135" width="17.0" height="1.400" fill="#5e5f58" opacity="1"/><rect x="0.0" y="138" width="6.0" height="1.400" fill="#f92672" opacity="1"/><rect x="8.0" y="138" width="9.0" height="1.400" fill="#7fa6b0" opacity="1"/><rect x="19.0" y="138" width="24.0" height="1.400" fill="#8fb83a" opacity="1"/><rect x="44.0" y="138" width="1.5" height="1.400" fill="#d8d8d2" opacity="1"/><rect x="47.0" y="138" width="1.5" height="1.400" fill="#d8d8d2" opacity="1"/><rect x="4.0" y="141" width="6.0" height="1.400" fill="#f92672" opacity="1"/><rect x="12.0" y="141" width="12.0" height="1.400" fill="#d8d8d2" opacity="1"/><rect x="24.0" y="141" width="27.0" height="1.400" fill="#a9a455" opacity="1"/><rect x="0.0" y="144" width="1.5" height="1.400" fill="#d8d8d2" opacity="1"/><rect x="0.0" y="150" width="8.0" height="1.400" fill="#5e5f58" opacity="1"/><rect x="0.0" y="153" width="6.0" height="1.400" fill="#f92672" opacity="1"/><rect x="8.0" y="153" width="9.0" height="1.400" fill="#7fa6b0" opacity="1"/><rect x="19.0" y="153" width="26.0" height="1.400" fill="#8fb83a" opacity="1"/><rect x="46.0" y="153" width="1.5" height="1.400" fill="#d8d8d2" opacity="1"/><rect x="49.0" y="153" width="1.5" height="1.400" fill="#d8d8d2" opacity="1"/><rect x="4.0" y="156" width="6.0" height="1.400" fill="#f92672" opacity="1"/><rect x="12.0" y="156" width="12.0" height="1.400" fill="#d8d8d2" opacity="1"/><rect x="24.0" y="156" width="30.0" height="1.400" fill="#a9a455" opacity="1"/><rect x="56.0" y="156" width="3.0" height="1.400" fill="#d8d8d2" opacity="1"/><rect x="0.0" y="159" width="1.5" height="1.400" fill="#d8d8d2" opacity="1"/><rect x="0.0" y="165" width="17.0" height="1.400" fill="#5e5f58" opacity="1"/><rect x="0.0" y="168" width="6.0" height="1.400" fill="#f92672" opacity="1"/><rect x="8.0" y="168" width="9.0" height="1.400" fill="#7fa6b0" opacity="1"/><rect x="19.0" y="168" width="22.0" height="1.400" fill="#8fb83a" opacity="1"/><rect x="42.0" y="168" width="1.5" height="1.400" fill="#d8d8d2" opacity="1"/><rect x="45.0" y="168" width="1.5" height="1.400" fill="#d8d8d2" opacity="1"/><rect x="4.0" y="171" width="6.0" height="1.400" fill="#f92672" opacity="1"/><rect x="12.0" y="171" width="12.0" height="1.400" fill="#d8d8d2" opacity="1"/><rect x="24.0" y="171" width="43.0" height="1.400" fill="#a9a455" opacity="1"/><rect x="0.0" y="174" width="1.5" height="1.400" fill="#d8d8d2" opacity="1"/><rect x="0.0" y="180" width="10.0" height="1.400" fill="#5e5f58" opacity="1"/><rect x="0.0" y="183" width="6.0" height="1.400" fill="#f92672" opacity="1"/><rect x="8.0" y="183" width="9.0" height="1.400" fill="#7fa6b0" opacity="1"/><rect x="19.0" y="183" width="19.0" height="1.400" fill="#8fb83a" opacity="1"/><rect x="39.0" y="183" width="1.5" height="1.400" fill="#d8d8d2" opacity="1"/><rect x="42.0" y="183" width="1.5" height="1.400" fill="#d8d8d2" opacity="1"/><rect x="4.0" y="186" width="6.0" height="1.400" fill="#f92672" opacity="1"/><rect x="12.0" y="186" width="12.0" height="1.400" fill="#d8d8d2" opacity="1"/><rect x="24.0" y="186" width="44.0" height="1.400" fill="#a9a455" opacity="1"/><rect x="70.0" y="186" width="3.0" height="1.400" fill="#d8d8d2" opacity="1"/><rect x="80.0" y="186" width="3.0" height="1.400" fill="#d8d8d2" opacity="1"/><rect x="0.0" y="189" width="1.5" height="1.400" fill="#d8d8d2" opacity="1"/><rect x="0.0" y="195" width="16.0" height="1.400" fill="#5e5f58" opacity="1"/><rect x="0.0" y="198" width="6.0" height="1.400" fill="#f92672" opacity="1"/><rect x="8.0" y="198" width="9.0" height="1.400" fill="#7fa6b0" opacity="1"/><rect x="19.0" y="198" width="19.0" height="1.400" fill="#8fb83a" opacity="1"/><rect x="39.0" y="198" width="1.5" height="1.400" fill="#d8d8d2" opacity="1"/><rect x="42.0" y="198" width="1.5" height="1.400" fill="#d8d8d2" opacity="1"/><rect x="4.0" y="201" width="6.0" height="1.400" fill="#f92672" opacity="1"/><rect x="12.0" y="201" width="12.0" height="1.400" fill="#d8d8d2" opacity="1"/><rect x="24.0" y="201" width="44.0" height="1.400" fill="#a9a455" opacity="1"/><rect x="70.0" y="201" width="3.0" height="1.400" fill="#d8d8d2" opacity="1"/><rect x="80.0" y="201" width="3.0" height="1.400" fill="#d8d8d2" opacity="1"/><rect x="0.0" y="204" width="1.5" height="1.400" fill="#d8d8d2" opacity="1"/><rect x="0.0" y="210" width="16.0" height="1.400" fill="#5e5f58" opacity="1"/><rect x="0.0" y="213" width="6.0" height="1.400" fill="#f92672" opacity="1"/><rect x="8.0" y="213" width="9.0" height="1.400" fill="#7fa6b0" opacity="1"/><rect x="19.0" y="213" width="24.0" height="1.400" fill="#8fb83a" opacity="1"/><rect x="44.0" y="213" width="1.5" height="1.400" fill="#d8d8d2" opacity="1"/><rect x="47.0" y="213" width="1.5" height="1.400" fill="#d8d8d2" opacity="1"/><rect x="4.0" y="216" width="6.0" height="1.400" fill="#f92672" opacity="1"/><rect x="12.0" y="216" width="12.0" height="1.400" fill="#d8d8d2" opacity="1"/><rect x="24.0" y="216" width="36.0" height="1.400" fill="#a9a455" opacity="1"/><rect x="62.0" y="216" width="5.0" height="1.400" fill="#d8d8d2" opacity="1"/><rect x="72.0" y="216" width="3.0" height="1.400" fill="#d8d8d2" opacity="1"/><rect x="0.0" y="219" width="1.5" height="1.400" fill="#d8d8d2" opacity="1"/><rect x="0.0" y="225" width="11.0" height="1.400" fill="#5e5f58" opacity="1"/><rect x="0.0" y="228" width="6.0" height="1.400" fill="#f92672" opacity="1"/><rect x="8.0" y="228" width="9.0" height="1.400" fill="#7fa6b0" opacity="1"/><rect x="19.0" y="228" width="20.0" height="1.400" fill="#8fb83a" opacity="1"/><rect x="40.0" y="228" width="1.5" height="1.400" fill="#d8d8d2" opacity="1"/><rect x="43.0" y="228" width="1.5" height="1.400" fill="#d8d8d2" opacity="1"/><rect x="4.0" y="231" width="6.0" height="1.400" fill="#f92672" opacity="1"/><rect x="12.0" y="231" width="12.0" height="1.400" fill="#d8d8d2" opacity="1"/><rect x="24.0" y="231" width="48.0" height="1.400" fill="#a9a455" opacity="1"/><rect x="0.0" y="234" width="1.5" height="1.400" fill="#d8d8d2" opacity="1"/><rect x="0.0" y="240" width="9.0" height="1.400" fill="#5e5f58" opacity="1"/><rect x="0.0" y="243" width="6.0" height="1.400" fill="#f92672" opacity="1"/><rect x="8.0" y="243" width="9.0" height="1.400" fill="#7fa6b0" opacity="1"/><rect x="19.0" y="243" width="22.0" height="1.400" fill="#8fb83a" opacity="1"/><rect x="42.0" y="243" width="1.5" height="1.400" fill="#d8d8d2" opacity="1"/><rect x="45.0" y="243" width="1.5" height="1.400" fill="#d8d8d2" opacity="1"/><rect x="4.0" y="246" width="6.0" height="1.400" fill="#f92672" opacity="1"/><rect x="12.0" y="246" width="12.0" height="1.400" fill="#d8d8d2" opacity="1"/><rect x="24.0" y="246" width="42.0" height="1.400" fill="#a9a455" opacity="1"/><rect x="68.0" y="246" width="4.0" height="1.400" fill="#d8d8d2" opacity="1"/><rect x="0.0" y="249" width="1.5" height="1.400" fill="#d8d8d2" opacity="1"/><rect x="0.0" y="255" width="12.0" height="1.400" fill="#5e5f58" opacity="1"/><rect x="0.0" y="258" width="6.0" height="1.400" fill="#f92672" opacity="1"/><rect x="8.0" y="258" width="9.0" height="1.400" fill="#7fa6b0" opacity="1"/><rect x="19.0" y="258" width="19.0" height="1.400" fill="#8fb83a" opacity="1"/><rect x="39.0" y="258" width="1.5" height="1.400" fill="#d8d8d2" opacity="1"/><rect x="42.0" y="258" width="1.5" height="1.400" fill="#d8d8d2" opacity="1"/><rect x="4.0" y="261" width="6.0" height="1.400" fill="#f92672" opacity="1"/><rect x="12.0" y="261" width="12.0" height="1.400" fill="#d8d8d2" opacity="1"/><rect x="24.0" y="261" width="29.0" height="1.400" fill="#a9a455" opacity="1"/><rect x="55.0" y="261" width="3.0" height="1.400" fill="#d8d8d2" opacity="1"/><rect x="0.0" y="264" width="1.5" height="1.400" fill="#d8d8d2" opacity="1"/><rect x="0.0" y="270" width="10.0" height="1.400" fill="#5e5f58" opacity="1"/><rect x="0.0" y="273" width="6.0" height="1.400" fill="#f92672" opacity="1"/><rect x="8.0" y="273" width="9.0" height="1.400" fill="#7fa6b0" opacity="1"/><rect x="19.0" y="273" width="25.0" height="1.400" fill="#8fb83a" opacity="1"/><rect x="45.0" y="273" width="1.5" height="1.400" fill="#d8d8d2" opacity="1"/><rect x="48.0" y="273" width="1.5" height="1.400" fill="#d8d8d2" opacity="1"/><rect x="4.0" y="276" width="6.0" height="1.400" fill="#f92672" opacity="1"/><rect x="12.0" y="276" width="12.0" height="1.400" fill="#d8d8d2" opacity="1"/><rect x="24.0" y="276" width="39.0" height="1.400" fill="#a9a455" opacity="1"/><rect x="65.0" y="276" width="7.0" height="1.400" fill="#d8d8d2" opacity="1"/><rect x="75.0" y="276" width="3.0" height="1.400" fill="#d8d8d2" opacity="1"/><rect x="0.0" y="279" width="1.5" height="1.400" fill="#d8d8d2" opacity="1"/><rect x="0.0" y="285" width="16.0" height="1.400" fill="#5e5f58" opacity="1"/><rect x="0.0" y="288" width="6.0" height="1.400" fill="#f92672" opacity="1"/><rect x="8.0" y="288" width="9.0" height="1.400" fill="#7fa6b0" opacity="1"/><rect x="19.0" y="288" width="23.0" height="1.400" fill="#8fb83a" opacity="1"/><rect x="43.0" y="288" width="1.5" height="1.400" fill="#d8d8d2" opacity="1"/><rect x="46.0" y="288" width="1.5" height="1.400" fill="#d8d8d2" opacity="1"/><rect x="4.0" y="291" width="6.0" height="1.400" fill="#f92672" opacity="1"/><rect x="12.0" y="291" width="12.0" height="1.400" fill="#d8d8d2" opacity="1"/><rect x="24.0" y="291" width="36.0" height="1.400" fill="#a9a455" opacity="1"/><rect x="62.0" y="291" width="6.0" height="1.400" fill="#d8d8d2" opacity="1"/><rect x="72.0" y="291" width="3.0" height="1.400" fill="#d8d8d2" opacity="1"/><rect x="0.0" y="294" width="1.5" height="1.400" fill="#d8d8d2" opacity="1"/><rect x="0.0" y="300" width="20.0" height="1.400" fill="#5e5f58" opacity="1"/><rect x="0.0" y="303" width="6.0" height="1.400" fill="#f92672" opacity="1"/><rect x="8.0" y="303" width="9.0" height="1.400" fill="#7fa6b0" opacity="1"/><rect x="19.0" y="303" width="25.0" height="1.400" fill="#8fb83a" opacity="1"/><rect x="45.0" y="303" width="1.5" height="1.400" fill="#d8d8d2" opacity="1"/><rect x="48.0" y="303" width="1.5" height="1.400" fill="#d8d8d2" opacity="1"/><rect x="4.0" y="306" width="6.0" height="1.400" fill="#f92672" opacity="1"/><rect x="12.0" y="306" width="12.0" height="1.400" fill="#d8d8d2" opacity="1"/><rect x="24.0" y="306" width="28.0" height="1.400" fill="#a9a455" opacity="1"/><rect x="0.0" y="309" width="1.5" height="1.400" fill="#d8d8d2" opacity="1"/><rect x="0.0" y="315" width="12.0" height="1.400" fill="#5e5f58" opacity="1"/><rect x="0.0" y="318" width="6.0" height="1.400" fill="#f92672" opacity="1"/><rect x="8.0" y="318" width="9.0" height="1.400" fill="#7fa6b0" opacity="1"/><rect x="19.0" y="318" width="25.0" height="1.400" fill="#8fb83a" opacity="1"/><rect x="45.0" y="318" width="1.5" height="1.400" fill="#d8d8d2" opacity="1"/><rect x="48.0" y="318" width="1.5" height="1.400" fill="#d8d8d2" opacity="1"/><rect x="4.0" y="321" width="6.0" height="1.400" fill="#f92672" opacity="1"/><rect x="12.0" y="321" width="12.0" height="1.400" fill="#d8d8d2" opacity="1"/><rect x="24.0" y="321" width="48.0" height="1.400" fill="#a9a455" opacity="1"/><rect x="74.0" y="321" width="2.0" height="1.400" fill="#d8d8d2" opacity="1"/><rect x="0.0" y="324" width="1.5" height="1.400" fill="#d8d8d2" opacity="1"/><rect x="0.0" y="330" width="12.0" height="1.400" fill="#5e5f58" opacity="1"/><rect x="0.0" y="333" width="6.0" height="1.400" fill="#f92672" opacity="1"/><rect x="8.0" y="333" width="9.0" height="1.400" fill="#7fa6b0" opacity="1"/><rect x="19.0" y="333" width="25.0" height="1.400" fill="#8fb83a" opacity="1"/><rect x="45.0" y="333" width="1.5" height="1.400" fill="#d8d8d2" opacity="1"/><rect x="48.0" y="333" width="1.5" height="1.400" fill="#d8d8d2" opacity="1"/><rect x="4.0" y="336" width="6.0" height="1.400" fill="#f92672" opacity="1"/><rect x="12.0" y="336" width="12.0" height="1.400" fill="#d8d8d2" opacity="1"/><rect x="24.0" y="336" width="35.0" height="1.400" fill="#a9a455" opacity="1"/><rect x="0.0" y="339" width="1.5" height="1.400" fill="#d8d8d2" opacity="1"/><rect x="0.0" y="345" width="22.0" height="1.400" fill="#5e5f58" opacity="1"/><rect x="0.0" y="348" width="6.0" height="1.400" fill="#f92672" opacity="1"/><rect x="8.0" y="348" width="9.0" height="1.400" fill="#7fa6b0" opacity="1"/><rect x="19.0" y="348" width="23.0" height="1.400" fill="#8fb83a" opacity="1"/><rect x="43.0" y="348" width="1.5" height="1.400" fill="#d8d8d2" opacity="1"/><rect x="46.0" y="348" width="1.5" height="1.400" fill="#d8d8d2" opacity="1"/><rect x="4.0" y="351" width="6.0" height="1.400" fill="#f92672" opacity="1"/><rect x="12.0" y="351" width="12.0" height="1.400" fill="#d8d8d2" opacity="1"/><rect x="24.0" y="351" width="26.0" height="1.400" fill="#a9a455" opacity="1"/><rect x="0.0" y="354" width="1.5" height="1.400" fill="#d8d8d2" opacity="1"/><rect x="0.0" y="360" width="13.0" height="1.400" fill="#5e5f58" opacity="1"/><rect x="0.0" y="363" width="6.0" height="1.400" fill="#f92672" opacity="1"/><rect x="8.0" y="363" width="9.0" height="1.400" fill="#7fa6b0" opacity="1"/><rect x="19.0" y="363" width="20.0" height="1.400" fill="#8fb83a" opacity="1"/><rect x="40.0" y="363" width="1.5" height="1.400" fill="#d8d8d2" opacity="1"/><rect x="43.0" y="363" width="1.5" height="1.400" fill="#d8d8d2" opacity="1"/><rect x="4.0" y="366" width="6.0" height="1.400" fill="#f92672" opacity="1"/><rect x="12.0" y="366" width="12.0" height="1.400" fill="#d8d8d2" opacity="1"/><rect x="24.0" y="366" width="45.0" height="1.400" fill="#a9a455" opacity="1"/><rect x="71.0" y="366" width="2.0" height="1.400" fill="#d8d8d2" opacity="1"/><rect x="81.0" y="366" width="3.0" height="1.400" fill="#d8d8d2" opacity="1"/><rect x="0.0" y="369" width="1.5" height="1.400" fill="#d8d8d2" opacity="1"/><rect x="0.0" y="375" width="12.0" height="1.400" fill="#5e5f58" opacity="1"/><rect x="0.0" y="378" width="6.0" height="1.400" fill="#f92672" opacity="1"/><rect x="8.0" y="378" width="9.0" height="1.400" fill="#7fa6b0" opacity="1"/><rect x="19.0" y="378" width="20.0" height="1.400" fill="#8fb83a" opacity="1"/><rect x="40.0" y="378" width="1.5" height="1.400" fill="#d8d8d2" opacity="1"/><rect x="43.0" y="378" width="1.5" height="1.400" fill="#d8d8d2" opacity="1"/><rect x="4.0" y="381" width="6.0" height="1.400" fill="#f92672" opacity="1"/><rect x="12.0" y="381" width="12.0" height="1.400" fill="#d8d8d2" opacity="1"/><rect x="24.0" y="381" width="33.0" height="1.400" fill="#a9a455" opacity="1"/><rect x="59.0" y="381" width="5.0" height="1.400" fill="#d8d8d2" opacity="1"/><rect x="69.0" y="381" width="3.0" height="1.400" fill="#d8d8d2" opacity="1"/><rect x="0.0" y="384" width="1.5" height="1.400" fill="#d8d8d2" opacity="1"/><rect x="0.0" y="390" width="15.0" height="1.400" fill="#5e5f58" opacity="1"/><rect x="0.0" y="393" width="6.0" height="1.400" fill="#f92672" opacity="1"/><rect x="8.0" y="393" width="9.0" height="1.400" fill="#7fa6b0" opacity="1"/><rect x="19.0" y="393" width="24.0" height="1.400" fill="#8fb83a" opacity="1"/><rect x="44.0" y="393" width="1.5" height="1.400" fill="#d8d8d2" opacity="1"/><rect x="47.0" y="393" width="1.5" height="1.400" fill="#d8d8d2" opacity="1"/><rect x="4.0" y="396" width="6.0" height="1.400" fill="#f92672" opacity="1"/><rect x="12.0" y="396" width="12.0" height="1.400" fill="#d8d8d2" opacity="1"/><rect x="24.0" y="396" width="43.0" height="1.400" fill="#a9a455" opacity="1"/><rect x="69.0" y="396" width="3.0" height="1.400" fill="#d8d8d2" opacity="1"/><rect x="0.0" y="399" width="1.5" height="1.400" fill="#d8d8d2" opacity="1"/><rect x="0.0" y="405" width="21.0" height="1.400" fill="#5e5f58" opacity="1"/><rect x="0.0" y="408" width="6.0" height="1.400" fill="#f92672" opacity="1"/><rect x="8.0" y="408" width="9.0" height="1.400" fill="#7fa6b0" opacity="1"/><rect x="19.0" y="408" width="26.0" height="1.400" fill="#8fb83a" opacity="1"/><rect x="46.0" y="408" width="1.5" height="1.400" fill="#d8d8d2" opacity="1"/><rect x="49.0" y="408" width="1.5" height="1.400" fill="#d8d8d2" opacity="1"/><rect x="4.0" y="411" width="6.0" height="1.400" fill="#f92672" opacity="1"/><rect x="12.0" y="411" width="12.0" height="1.400" fill="#d8d8d2" opacity="1"/><rect x="24.0" y="411" width="34.0" height="1.400" fill="#a9a455" opacity="1"/><rect x="0.0" y="414" width="1.5" height="1.400" fill="#d8d8d2" opacity="1"/><rect x="0.0" y="420" width="13.0" height="1.400" fill="#5e5f58" opacity="1"/><rect x="0.0" y="423" width="6.0" height="1.400" fill="#f92672" opacity="1"/><rect x="8.0" y="423" width="9.0" height="1.400" fill="#7fa6b0" opacity="1"/><rect x="19.0" y="423" width="24.0" height="1.400" fill="#8fb83a" opacity="1"/><rect x="44.0" y="423" width="1.5" height="1.400" fill="#d8d8d2" opacity="1"/><rect x="47.0" y="423" width="1.5" height="1.400" fill="#d8d8d2" opacity="1"/><rect x="4.0" y="426" width="6.0" height="1.400" fill="#f92672" opacity="1"/><rect x="12.0" y="426" width="12.0" height="1.400" fill="#d8d8d2" opacity="1"/><rect x="24.0" y="426" width="33.0" height="1.400" fill="#a9a455" opacity="1"/><rect x="59.0" y="426" width="3.0" height="1.400" fill="#d8d8d2" opacity="1"/><rect x="69.0" y="426" width="3.0" height="1.400" fill="#d8d8d2" opacity="1"/><rect x="0.0" y="429" width="1.5" height="1.400" fill="#d8d8d2" opacity="1"/><rect x="0.0" y="435" width="18.0" height="1.400" fill="#5e5f58" opacity="1"/><rect x="0.0" y="438" width="6.0" height="1.400" fill="#f92672" opacity="1"/><rect x="8.0" y="438" width="9.0" height="1.400" fill="#7fa6b0" opacity="1"/><rect x="19.0" y="438" width="21.0" height="1.400" fill="#8fb83a" opacity="1"/><rect x="41.0" y="438" width="1.5" height="1.400" fill="#d8d8d2" opacity="1"/><rect x="44.0" y="438" width="1.5" height="1.400" fill="#d8d8d2" opacity="1"/><rect x="4.0" y="441" width="6.0" height="1.400" fill="#f92672" opacity="1"/><rect x="12.0" y="441" width="12.0" height="1.400" fill="#d8d8d2" opacity="1"/><rect x="24.0" y="441" width="26.0" height="1.400" fill="#a9a455" opacity="1"/><rect x="52.0" y="441" width="6.0" height="1.400" fill="#d8d8d2" opacity="1"/><rect x="62.0" y="441" width="3.0" height="1.400" fill="#d8d8d2" opacity="1"/><rect x="0.0" y="444" width="1.5" height="1.400" fill="#d8d8d2" opacity="1"/><rect x="0.0" y="450" width="12.0" height="1.400" fill="#5e5f58" opacity="1"/><rect x="0.0" y="453" width="6.0" height="1.400" fill="#f92672" opacity="1"/><rect x="8.0" y="453" width="9.0" height="1.400" fill="#7fa6b0" opacity="1"/><rect x="19.0" y="453" width="18.0" height="1.400" fill="#8fb83a" opacity="1"/><rect x="38.0" y="453" width="1.5" height="1.400" fill="#d8d8d2" opacity="1"/><rect x="41.0" y="453" width="1.5" height="1.400" fill="#d8d8d2" opacity="1"/><rect x="4.0" y="456" width="6.0" height="1.400" fill="#f92672" opacity="1"/><rect x="12.0" y="456" width="12.0" height="1.400" fill="#d8d8d2" opacity="1"/><rect x="24.0" y="456" width="30.0" height="1.400" fill="#a9a455" opacity="1"/><rect x="56.0" y="456" width="4.0" height="1.400" fill="#d8d8d2" opacity="1"/><rect x="0.0" y="459" width="1.5" height="1.400" fill="#d8d8d2" opacity="1"/><rect x="0.0" y="465" width="13.0" height="1.400" fill="#5e5f58" opacity="1"/><rect x="0.0" y="468" width="6.0" height="1.400" fill="#f92672" opacity="1"/><rect x="8.0" y="468" width="9.0" height="1.400" fill="#7fa6b0" opacity="1"/><rect x="19.0" y="468" width="20.0" height="1.400" fill="#8fb83a" opacity="1"/><rect x="40.0" y="468" width="1.5" height="1.400" fill="#d8d8d2" opacity="1"/><rect x="43.0" y="468" width="1.5" height="1.400" fill="#d8d8d2" opacity="1"/><rect x="4.0" y="471" width="6.0" height="1.400" fill="#f92672" opacity="1"/><rect x="12.0" y="471" width="12.0" height="1.400" fill="#d8d8d2" opacity="1"/><rect x="24.0" y="471" width="48.0" height="1.400" fill="#a9a455" opacity="1"/><rect x="0.0" y="474" width="1.5" height="1.400" fill="#d8d8d2" opacity="1"/><rect x="0.0" y="480" width="17.0" height="1.400" fill="#5e5f58" opacity="1"/><rect x="0.0" y="483" width="6.0" height="1.400" fill="#f92672" opacity="1"/><rect x="8.0" y="483" width="9.0" height="1.400" fill="#7fa6b0" opacity="1"/><rect x="19.0" y="483" width="18.0" height="1.400" fill="#8fb83a" opacity="1"/><rect x="38.0" y="483" width="1.5" height="1.400" fill="#d8d8d2" opacity="1"/><rect x="41.0" y="483" width="1.5" height="1.400" fill="#d8d8d2" opacity="1"/><rect x="4.0" y="486" width="6.0" height="1.400" fill="#f92672" opacity="1"/><rect x="12.0" y="486" width="12.0" height="1.400" fill="#d8d8d2" opacity="1"/><rect x="24.0" y="486" width="40.0" height="1.400" fill="#a9a455" opacity="1"/><rect x="0.0" y="489" width="1.5" height="1.400" fill="#d8d8d2" opacity="1"/><rect x="0.0" y="495" width="20.0" height="1.400" fill="#5e5f58" opacity="1"/><rect x="0.0" y="498" width="6.0" height="1.400" fill="#f92672" opacity="1"/><rect x="8.0" y="498" width="9.0" height="1.400" fill="#7fa6b0" opacity="1"/><rect x="19.0" y="498" width="26.0" height="1.400" fill="#8fb83a" opacity="1"/><rect x="46.0" y="498" width="1.5" height="1.400" fill="#d8d8d2" opacity="1"/><rect x="49.0" y="498" width="1.5" height="1.400" fill="#d8d8d2" opacity="1"/><rect x="4.0" y="501" width="6.0" height="1.400" fill="#f92672" opacity="1"/><rect x="12.0" y="501" width="12.0" height="1.400" fill="#d8d8d2" opacity="1"/><rect x="24.0" y="501" width="38.0" height="1.400" fill="#a9a455" opacity="1"/><rect x="64.0" y="501" width="5.0" height="1.400" fill="#d8d8d2" opacity="1"/><rect x="74.0" y="501" width="3.0" height="1.400" fill="#d8d8d2" opacity="1"/><rect x="0.0" y="504" width="1.5" height="1.400" fill="#d8d8d2" opacity="1"/><rect x="0.0" y="510" width="18.0" height="1.400" fill="#5e5f58" opacity="1"/><rect x="0.0" y="513" width="6.0" height="1.400" fill="#f92672" opacity="1"/><rect x="8.0" y="513" width="9.0" height="1.400" fill="#7fa6b0" opacity="1"/><rect x="19.0" y="513" width="24.0" height="1.400" fill="#8fb83a" opacity="1"/><rect x="44.0" y="513" width="1.5" height="1.400" fill="#d8d8d2" opacity="1"/><rect x="47.0" y="513" width="1.5" height="1.400" fill="#d8d8d2" opacity="1"/><rect x="4.0" y="516" width="6.0" height="1.400" fill="#f92672" opacity="1"/><rect x="12.0" y="516" width="12.0" height="1.400" fill="#d8d8d2" opacity="1"/><rect x="24.0" y="516" width="27.0" height="1.400" fill="#a9a455" opacity="1"/><rect x="53.0" y="516" width="3.0" height="1.400" fill="#d8d8d2" opacity="1"/><rect x="63.0" y="516" width="3.0" height="1.400" fill="#d8d8d2" opacity="1"/><rect x="0.0" y="519" width="1.5" height="1.400" fill="#d8d8d2" opacity="1"/><rect x="0.0" y="525" width="9.0" height="1.400" fill="#5e5f58" opacity="1"/><rect x="0.0" y="528" width="6.0" height="1.400" fill="#f92672" opacity="1"/><rect x="8.0" y="528" width="9.0" height="1.400" fill="#7fa6b0" opacity="1"/><rect x="19.0" y="528" width="23.0" height="1.400" fill="#8fb83a" opacity="1"/><rect x="43.0" y="528" width="1.5" height="1.400" fill="#d8d8d2" opacity="1"/><rect x="46.0" y="528" width="1.5" height="1.400" fill="#d8d8d2" opacity="1"/><rect x="4.0" y="531" width="6.0" height="1.400" fill="#f92672" opacity="1"/><rect x="12.0" y="531" width="12.0" height="1.400" fill="#d8d8d2" opacity="1"/><rect x="24.0" y="531" width="45.0" height="1.400" fill="#a9a455" opacity="1"/><rect x="71.0" y="531" width="2.0" height="1.400" fill="#d8d8d2" opacity="1"/><rect x="0.0" y="534" width="1.5" height="1.400" fill="#d8d8d2" opacity="1"/><rect x="0.0" y="540" width="16.0" height="1.400" fill="#5e5f58" opacity="1"/><rect x="0.0" y="543" width="6.0" height="1.400" fill="#f92672" opacity="1"/><rect x="8.0" y="543" width="9.0" height="1.400" fill="#7fa6b0" opacity="1"/><rect x="19.0" y="543" width="19.0" height="1.400" fill="#8fb83a" opacity="1"/><rect x="39.0" y="543" width="1.5" height="1.400" fill="#d8d8d2" opacity="1"/><rect x="42.0" y="543" width="1.5" height="1.400" fill="#d8d8d2" opacity="1"/><rect x="4.0" y="546" width="6.0" height="1.400" fill="#f92672" opacity="1"/><rect x="12.0" y="546" width="12.0" height="1.400" fill="#d8d8d2" opacity="1"/><rect x="24.0" y="546" width="37.0" height="1.400" fill="#a9a455" opacity="1"/><rect x="63.0" y="546" width="2.0" height="1.400" fill="#d8d8d2" opacity="1"/><rect x="0.0" y="549" width="1.5" height="1.400" fill="#d8d8d2" opacity="1"/><rect x="0.0" y="555" width="17.0" height="1.400" fill="#5e5f58" opacity="1"/><rect x="0.0" y="558" width="6.0" height="1.400" fill="#f92672" opacity="1"/><rect x="8.0" y="558" width="9.0" height="1.400" fill="#7fa6b0" opacity="1"/><rect x="19.0" y="558" width="24.0" height="1.400" fill="#8fb83a" opacity="1"/><rect x="44.0" y="558" width="1.5" height="1.400" fill="#d8d8d2" opacity="1"/><rect x="47.0" y="558" width="1.5" height="1.400" fill="#d8d8d2" opacity="1"/><rect x="4.0" y="561" width="6.0" height="1.400" fill="#f92672" opacity="1"/><rect x="12.0" y="561" width="12.0" height="1.400" fill="#d8d8d2" opacity="1"/><rect x="24.0" y="561" width="30.0" height="1.400" fill="#a9a455" opacity="1"/><rect x="56.0" y="561" width="4.0" height="1.400" fill="#d8d8d2" opacity="1"/><rect x="0.0" y="564" width="1.5" height="1.400" fill="#d8d8d2" opacity="1"/><rect x="0.0" y="570" width="15.0" height="1.400" fill="#5e5f58" opacity="1"/><rect x="0.0" y="573" width="6.0" height="1.400" fill="#f92672" opacity="1"/><rect x="8.0" y="573" width="9.0" height="1.400" fill="#7fa6b0" opacity="1"/><rect x="19.0" y="573" width="19.0" height="1.400" fill="#8fb83a" opacity="1"/><rect x="39.0" y="573" width="1.5" height="1.400" fill="#d8d8d2" opacity="1"/><rect x="42.0" y="573" width="1.5" height="1.400" fill="#d8d8d2" opacity="1"/><rect x="4.0" y="576" width="6.0" height="1.400" fill="#f92672" opacity="1"/><rect x="12.0" y="576" width="12.0" height="1.400" fill="#d8d8d2" opacity="1"/><rect x="24.0" y="576" width="29.0" height="1.400" fill="#a9a455" opacity="1"/><rect x="0.0" y="579" width="1.5" height="1.400" fill="#d8d8d2" opacity="1"/><rect x="0.0" y="585" width="15.0" height="1.400" fill="#5e5f58" opacity="1"/><rect x="0.0" y="588" width="6.0" height="1.400" fill="#f92672" opacity="1"/><rect x="8.0" y="588" width="9.0" height="1.400" fill="#7fa6b0" opacity="1"/><rect x="19.0" y="588" width="25.0" height="1.400" fill="#8fb83a" opacity="1"/><rect x="45.0" y="588" width="1.5" height="1.400" fill="#d8d8d2" opacity="1"/><rect x="48.0" y="588" width="1.5" height="1.400" fill="#d8d8d2" opacity="1"/><rect x="4.0" y="591" width="6.0" height="1.400" fill="#f92672" opacity="1"/><rect x="12.0" y="591" width="12.0" height="1.400" fill="#d8d8d2" opacity="1"/><rect x="24.0" y="591" width="41.0" height="1.400" fill="#a9a455" opacity="1"/><rect x="67.0" y="591" width="3.0" height="1.400" fill="#d8d8d2" opacity="1"/><rect x="77.0" y="591" width="3.0" height="1.400" fill="#d8d8d2" opacity="1"/><rect x="0.0" y="594" width="1.5" height="1.400" fill="#d8d8d2" opacity="1"/><rect x="0.0" y="600" width="13.0" height="1.400" fill="#5e5f58" opacity="1"/><rect x="0.0" y="603" width="6.0" height="1.400" fill="#f92672" opacity="1"/><rect x="8.0" y="603" width="9.0" height="1.400" fill="#7fa6b0" opacity="1"/><rect x="19.0" y="603" width="22.0" height="1.400" fill="#8fb83a" opacity="1"/><rect x="42.0" y="603" width="1.5" height="1.400" fill="#d8d8d2" opacity="1"/><rect x="45.0" y="603" width="1.5" height="1.400" fill="#d8d8d2" opacity="1"/><rect x="4.0" y="606" width="6.0" height="1.400" fill="#f92672" opacity="1"/><rect x="12.0" y="606" width="12.0" height="1.400" fill="#d8d8d2" opacity="1"/><rect x="24.0" y="606" width="41.0" height="1.400" fill="#a9a455" opacity="1"/><rect x="0.0" y="609" width="1.5" height="1.400" fill="#d8d8d2" opacity="1"/><rect x="0.0" y="615" width="10.0" height="1.400" fill="#5e5f58" opacity="1"/><rect x="0.0" y="618" width="6.0" height="1.400" fill="#f92672" opacity="1"/><rect x="8.0" y="618" width="9.0" height="1.400" fill="#7fa6b0" opacity="1"/><rect x="19.0" y="618" width="26.0" height="1.400" fill="#8fb83a" opacity="1"/><rect x="46.0" y="618" width="1.5" height="1.400" fill="#d8d8d2" opacity="1"/><rect x="49.0" y="618" width="1.5" height="1.400" fill="#d8d8d2" opacity="1"/><rect x="4.0" y="621" width="6.0" height="1.400" fill="#f92672" opacity="1"/><rect x="12.0" y="621" width="12.0" height="1.400" fill="#d8d8d2" opacity="1"/><rect x="24.0" y="621" width="26.0" height="1.400" fill="#a9a455" opacity="1"/><rect x="52.0" y="621" width="6.0" height="1.400" fill="#d8d8d2" opacity="1"/><rect x="62.0" y="621" width="3.0" height="1.400" fill="#d8d8d2" opacity="1"/><rect x="0.0" y="624" width="1.5" height="1.400" fill="#d8d8d2" opacity="1"/><rect x="0.0" y="630" width="19.0" height="1.400" fill="#5e5f58" opacity="1"/><rect x="0.0" y="633" width="6.0" height="1.400" fill="#f92672" opacity="1"/><rect x="8.0" y="633" width="9.0" height="1.400" fill="#7fa6b0" opacity="1"/><rect x="19.0" y="633" width="26.0" height="1.400" fill="#8fb83a" opacity="1"/><rect x="46.0" y="633" width="1.5" height="1.400" fill="#d8d8d2" opacity="1"/><rect x="49.0" y="633" width="1.5" height="1.400" fill="#d8d8d2" opacity="1"/><rect x="4.0" y="636" width="6.0" height="1.400" fill="#f92672" opacity="1"/><rect x="12.0" y="636" width="12.0" height="1.400" fill="#d8d8d2" opacity="1"/><rect x="24.0" y="636" width="26.0" height="1.400" fill="#a9a455" opacity="1"/><rect x="0.0" y="639" width="1.5" height="1.400" fill="#d8d8d2" opacity="1"/><rect x="0.0" y="645" width="12.0" height="1.400" fill="#5e5f58" opacity="1"/><rect x="0.0" y="648" width="6.0" height="1.400" fill="#f92672" opacity="1"/><rect x="8.0" y="648" width="9.0" height="1.400" fill="#7fa6b0" opacity="1"/><rect x="19.0" y="648" width="19.0" height="1.400" fill="#8fb83a" opacity="1"/><rect x="39.0" y="648" width="1.5" height="1.400" fill="#d8d8d2" opacity="1"/><rect x="42.0" y="648" width="1.5" height="1.400" fill="#d8d8d2" opacity="1"/><rect x="4.0" y="651" width="6.0" height="1.400" fill="#f92672" opacity="1"/><rect x="12.0" y="651" width="12.0" height="1.400" fill="#d8d8d2" opacity="1"/><rect x="24.0" y="651" width="48.0" height="1.400" fill="#a9a455" opacity="1"/><rect x="0.0" y="654" width="1.5" height="1.400" fill="#d8d8d2" opacity="1"/><rect x="0.0" y="660" width="16.0" height="1.400" fill="#5e5f58" opacity="1"/><rect x="0.0" y="663" width="6.0" height="1.400" fill="#f92672" opacity="1"/><rect x="8.0" y="663" width="9.0" height="1.400" fill="#7fa6b0" opacity="1"/><rect x="19.0" y="663" width="23.0" height="1.400" fill="#8fb83a" opacity="1"/><rect x="43.0" y="663" width="1.5" height="1.400" fill="#d8d8d2" opacity="1"/><rect x="46.0" y="663" width="1.5" height="1.400" fill="#d8d8d2" opacity="1"/><rect x="4.0" y="666" width="6.0" height="1.400" fill="#f92672" opacity="1"/><rect x="12.0" y="666" width="12.0" height="1.400" fill="#d8d8d2" opacity="1"/><rect x="24.0" y="666" width="31.0" height="1.400" fill="#a9a455" opacity="1"/><rect x="57.0" y="666" width="3.0" height="1.400" fill="#d8d8d2" opacity="1"/><rect x="0.0" y="669" width="1.5" height="1.400" fill="#d8d8d2" opacity="1"/><rect x="0.0" y="675" width="20.0" height="1.400" fill="#5e5f58" opacity="1"/><rect x="0.0" y="678" width="6.0" height="1.400" fill="#f92672" opacity="1"/><rect x="8.0" y="678" width="9.0" height="1.400" fill="#7fa6b0" opacity="1"/><rect x="19.0" y="678" width="26.0" height="1.400" fill="#8fb83a" opacity="1"/><rect x="46.0" y="678" width="1.5" height="1.400" fill="#d8d8d2" opacity="1"/><rect x="49.0" y="678" width="1.5" height="1.400" fill="#d8d8d2" opacity="1"/><rect x="4.0" y="681" width="6.0" height="1.400" fill="#f92672" opacity="1"/><rect x="12.0" y="681" width="12.0" height="1.400" fill="#d8d8d2" opacity="1"/><rect x="24.0" y="681" width="36.0" height="1.400" fill="#a9a455" opacity="1"/><rect x="62.0" y="681" width="6.0" height="1.400" fill="#d8d8d2" opacity="1"/><rect x="0.0" y="684" width="1.5" height="1.400" fill="#d8d8d2" opacity="1"/></svg>
<div class="abs" style="left:758px;top:0;width:10px;height:690px;background:#292a24"></div>
<div class="abs" style="left:759px;top:5px;width:8px;height:49px;background:#8b8b88"></div>
<span class="abs" style="left:41px;top:584px"><svg width="9" height="9" viewBox="0 0 9 9" ><rect x="0.500" y="0.500" width="8" height="8" fill="none" stroke="#7a7b74" stroke-width="1"/><path d="M2.500 4.500h4" stroke="#7a7b74" stroke-width="1"/></svg></span>
<span class="abs" style="left:45px;top:599px;width:1px;height:34px;background:#5a5b54"></span>
<span class="abs" style="left:45px;top:632px;width:9px;height:1px;background:#5a5b54"></span>
</div>
<div id="console" class="abs">
<span class="abs t" style="left:23px;top:25px;font-size:14px;color:#ececE6">uniapp - Web</span>
<span class="abs" style="left:18px;top:46px;width:114px;height:1px;background:#c8c8c2"></span>
<span class="abs" style="left:955.5px;top:25.5px"><svg width="12" height="13" viewBox="0 0 12 13" ><ellipse cx="6" cy="7.5" rx="3.3" ry="4.5" fill="none" stroke="#d2d2cc" stroke-width="1.1"/><path d="M6 3.500v8.500M3.800 3.200a2.200 2.200 0 014.400 0M0.300 7.500h2.400M9.300 7.500h2.400M0.800 3.500l2 2M11.200 3.500l-2 2M0.800 12l2-2M11.200 12l-2-2" fill="none" stroke="#d2d2cc" stroke-width="1"/></svg></span>
<span class="abs" style="left:985.0px;top:25.5px"><svg width="13" height="13" viewBox="0 0 13 13" ><path d="M3.200 1.800A5.600 5.600 0 1 1 1 6.500" fill="none" stroke="#d2d2cc" stroke-width="1.100"/><path d="M0.500 1v3h3" fill="none" stroke="#d2d2cc" stroke-width="1.100"/><path d="M5 4.200l4 2.400-4 2.400z" fill="#d2d2cc"/></svg></span>
<span class="abs" style="left:1016.0px;top:26.0px"><svg width="12" height="12" viewBox="0 0 12 12" ><rect x="0.600" y="0.600" width="10.800" height="10.800" fill="none" stroke="#d2d2cc" stroke-width="1.100"/><rect x="2.600" y="2.600" width="6.800" height="6.800" fill="#d2d2cc"/></svg></span>
<span class="abs" style="left:1045.0px;top:26.0px"><svg width="14" height="12" viewBox="0 0 14 12" ><path d="M8 0.600H0.600v10.800h12.800V6" fill="none" stroke="#d2d2cc" stroke-width="1.100"/><path d="M2.800 4l2.400 2-2.400 2M6.500 9h3.500M9 2.500h4.500M11.200 0.200v4.600" fill="none" stroke="#d2d2cc" stroke-width="1.100"/></svg></span>
<span class="abs" style="left:1074.5px;top:28.0px"><svg width="14" height="8" viewBox="0 0 14 8" ><path d="M1 7l6-5.800 6 5.800" fill="none" stroke="#d2d2cc" stroke-width="1.300"/></svg></span>
<span class="abs" style="left:1104.0px;top:27.0px"><svg width="15" height="10" viewBox="0 0 15 10" ><path d="M0.800 0.800l6.400 8.400M7.200 0.800l-6.400 8.400" fill="none" stroke="#d2d2cc" stroke-width="1.200"/><path d="M11.500 0.500v8.500M8.800 6.300l2.700 2.900 2.700-2.900" fill="none" stroke="#d2d2cc" stroke-width="1.200"/></svg></span>
<div class="abs" style="left:1122px;top:0;width:12px;height:200px;background:#2b2723"></div>
<div class="co" style="top:65px"><span class="tm">13:55:59.892</span> {app_agreement: , center_setting: , index_setting: , navigation_menu: , navigation_setting: , <a>...</a>} <a>at pages</a></div>
<div class="co" style="top:85px"><a>/register/register.vue:185</a></div>
<div class="co" style="top:105px"><span class="tm">13:56:33.343</span> App Hide <a>at App.vue:30</a></div>
<div class="co" style="top:125px"><span class="tm">13:56:33.472</span> [HMR] Waiting for update signal from WDS...</div>
<div class="co" style="top:145px"><span class="tm">13:56:34.251</span> {app_agreement: , center_setting: , index_setting: , navigation_menu: , navigation_setting: , <a>...</a>} <a>at pages</a></div>
<div class="co" style="top:165px"><a>/index/index.vue:381</a></div>
</div>
<div id="rp" class="abs">
<div class="abs" style="left:0;top:0;width:385px;height:29px;background:#1d1e1a"></div>
<div class="abs" style="left:0;top:0;width:110px;height:29px;background:#272822"></div>
<span class="abs t" style="left:11px;top:7px;font-size:13px;color:#c9c9c3">Web<span class="z">浏览器</span></span>
<span class="abs" style="left:87px;top:10px"><svg width="9" height="9" viewBox="0 0 9 9" ><path d="M0.500 0.500l8 8M8.500 0.500l-8 8" stroke="#c9c9c3" stroke-width="1.100"/></svg></span>
<div class="abs t" style="left:6px;top:36px;width:372px;height:26px;border:1px solid #555650;background:#22231e;line-height:24px;padding-left:8px;font-size:13.5px;color:#bdbdb6;overflow:hidden">http://localhost:8080/mobile/bundle/pages/bargain/bargain</div>
<div class="abs t" style="left:7px;top:68px;width:118px;height:25px;border:1px solid #1c1d19;background:#23241f;line-height:23px;padding-left:4px;font-size:12.500px;color:#b4b5ae">PC<span style="font-size:11.500px">模式</span></div>
<span class="abs" style="left:113px;top:78px"><svg width="7" height="4" viewBox="0 0 7 4" ><path d="M0 0h7L3.500 4z" fill="#c4c4be"/></svg></span>
<span class="abs" style="left:138.0px;top:74.0px"><svg width="13" height="12" viewBox="0 0 13 12" ><path d="M5 0.600h7.400v10.800H0.600V6" fill="none" stroke="#e2e2dc" stroke-width="1.200"/><path d="M0.600 0.600l6 5.800M0.600 4.200V0.600h3.800" fill="none" stroke="#e2e2dc" stroke-width="1.200"/></svg></span>
<span class="abs" style="left:167.5px;top:73.0px"><svg width="14" height="14" viewBox="0 0 14 14" ><circle cx="7" cy="7" r="2.300" fill="none" stroke="#e2e2dc" stroke-width="1.200"/><path d="M5.600 0.800h2.800l0.500 1.700 1.700-0.800 2 2-0.800 1.700 1.700 0.500v2.800l-1.700 0.500 0.800 1.700-2 2-1.700-0.800-0.500 1.700H5.600l-0.500-1.700-1.700 0.800-2-2 0.800-1.700-1.700-0.500V5.900l1.700-0.500-0.800-1.700 2-2 1.700 0.800z" fill="none" stroke="#e2e2dc" stroke-width="1.100" stroke-linejoin="round"/></svg></span>
<span class="abs" style="left:197.5px;top:74.0px"><svg width="14" height="12" viewBox="0 0 14 12" ><rect x="0.600" y="0.600" width="12.800" height="10.800" fill="none" stroke="#e2e2dc" stroke-width="1.200"/><path d="M3 3.500l2.500 2.300L3 8.100M7 8.500h3.500" fill="none" stroke="#e2e2dc" stroke-width="1.100"/></svg></span>
<span class="abs" style="left:228.0px;top:75.0px"><svg width="13" height="10" viewBox="0 0 13 10" ><path d="M12.500 5H1.500M5.500 0.800L1.300 5l4.200 4.200" fill="none" stroke="#e2e2dc" stroke-width="2"/></svg></span>
<span class="abs" style="left:258.0px;top:75.0px"><svg width="13" height="10" viewBox="0 0 13 10" ><path d="M0.500 5h11M7.500 0.800L11.700 5 7.500 9.200" fill="none" stroke="#e2e2dc" stroke-width="2"/></svg></span>
<span class="abs" style="left:288.0px;top:73.5px"><svg width="13" height="13" viewBox="0 0 13 13" ><path d="M11.800 8A5.500 5.500 0 1 1 10 2.600" fill="none" stroke="#e2e2dc" stroke-width="1.300"/><path d="M8 0.300l3 2.500-3.300 1.700" fill="none" stroke="#e2e2dc" stroke-width="1.200"/></svg></span>
<span class="abs" style="left:319.5px;top:73.5px"><svg width="10" height="13" viewBox="0 0 10 13" ><rect x="0.700" y="6" width="8.600" height="6.300" fill="none" stroke="#e2e2dc" stroke-width="1.300"/><path d="M2.300 5.800V3.600a2.700 2.700 0 0 1 5.200-0.900" fill="none" stroke="#e2e2dc" stroke-width="1.300"/></svg></span>
<span class="abs" style="left:348.5px;top:73.5px"><svg width="12" height="12" viewBox="0 0 12 12" ><rect x="0.600" y="0.600" width="4" height="4" fill="none" stroke="#e2e2dc" stroke-width="1.200"/><rect x="7.400" y="0.600" width="4" height="4" fill="none" stroke="#e2e2dc" stroke-width="1.200"/><rect x="0.600" y="7.400" width="4" height="4" fill="none" stroke="#e2e2dc" stroke-width="1.200"/><path d="M7.300 7.800h1.200M7.300 11h1.200M10 7.400h1.600v4H10" fill="none" stroke="#e2e2dc" stroke-width="1.200"/></svg></span>
<div class="abs" style="left:0px;top:100px;width:385px;height:822px;background:#ee2467;overflow:hidden"><div class="abs" style="left:1px;top:0;width:384px;height:822px"><div class="abs" style="left:-1px;top:0;width:385px;height:45px;background:#fff"></div>
<div class="abs" style="left:12px;top:7px;width:83px;height:31px;border:1px solid #ededed;border-radius:16px;background:#fff"></div>
<span class="abs" style="left:28px;top:14px"><svg width="10" height="17" viewBox="0 0 10 17" ><path d="M8.500 1L1.500 8.500l7 7.500" fill="none" stroke="#1a1a1a" stroke-width="1.900"/></svg></span>
<span class="abs" style="left:53px;top:13px;width:1px;height:19px;background:#dcdcdc"></span>
<span class="abs" style="left:67px;top:16px"><svg width="16" height="13" viewBox="0 0 16 13" ><path d="M0 1.200h16M0 6.500h16M0 11.800h16" stroke="#1a1a1a" stroke-width="1.900"/></svg></span>
<span class="abs t" style="left:92px;width:200px;text-align:center;top:12px;line-height:22px;font-size:16px;font-weight:bold;color:#111">砍价活动</span>
<svg class="abs" style="left:-1px;top:45px;overflow:hidden" width="385" height="150" viewBox="-1 0 385 150">
<defs>
<linearGradient id="bg1" x1="0" y1="0" x2="0" y2="1"><stop offset="0" stop-color="#f0205e"/><stop offset="0.6" stop-color="#f22070"/><stop offset="1" stop-color="#f21a80"/></linearGradient>
<linearGradient id="cg" x1="0" y1="0" x2="0" y2="1"><stop offset="0" stop-color="#ee2640"/><stop offset="0.3" stop-color="#f03452"/><stop offset="0.62" stop-color="#f34c6e"/><stop offset="0.745" stop-color="#f23860"/><stop offset="0.775" stop-color="#f81e82"/><stop offset="1" stop-color="#f81e86"/></linearGradient>
<radialGradient id="bal1" cx="0.4" cy="0.3" r="0.75"><stop offset="0" stop-color="#ff8c5c"/><stop offset="0.6" stop-color="#f55c4c"/><stop offset="1" stop-color="#ec3a50"/></radialGradient>
<radialGradient id="bal2" cx="0.4" cy="0.3" r="0.75"><stop offset="0" stop-color="#ffd23c"/><stop offset="0.5" stop-color="#fca032"/><stop offset="1" stop-color="#f5602e"/></radialGradient>
<radialGradient id="glow"><stop offset="0" stop-color="#fff" stop-opacity="1"/><stop offset="0.45" stop-color="#fff" stop-opacity="0.9"/><stop offset="0.7" stop-color="#ffb8e8" stop-opacity="0.45"/><stop offset="1" stop-color="#ff80d8" stop-opacity="0"/></radialGradient>
<radialGradient id="mag"><stop offset="0" stop-color="#f058e8" stop-opacity="0.95"/><stop offset="0.6" stop-color="#ee40d0" stop-opacity="0.6"/><stop offset="1" stop-color="#f030b0" stop-opacity="0"/></radialGradient>
<linearGradient id="ring" x1="0" y1="0" x2="0" y2="1"><stop offset="0" stop-color="#f8b8c4"/><stop offset="0.5" stop-color="#f89a90"/><stop offset="1" stop-color="#f4603a"/></linearGradient>
<filter id="bl"><feGaussianBlur stdDeviation="1.2"/></filter>
<filter id="bl3"><feGaussianBlur stdDeviation="4"/></filter>
</defs>
<rect x="-1" width="385" height="150" fill="url(#bg1)"/>
<path d="M40 0h42c-14 20-22 44-24 70c-8-26-14-50-18-70z" fill="#8a1878" filter="url(#bl3)"/>
<path d="M47 0h30c-10 16-16 34-18 52c-5-18-9-36-12-52z" fill="#861474" filter="url(#bl)"/>
<path d="M-1 95c20-10 50 0 70 30l10 25h-80z" fill="#e62cb4" opacity="0.75" filter="url(#bl3)"/>
<path d="M296 0h88v52c-14 6-30 6-44-4c-18-12-34-30-44-48z" fill="#f6582e" filter="url(#bl)"/>
<path d="M300 0h84v26c-30 6-62-4-84-26z" fill="#fb7a36" filter="url(#bl)"/>
<path d="M384 40v110h-80c20-20 40-60 50-90z" fill="#f226a0" opacity="0.55" filter="url(#bl3)"/>
<ellipse cx="29" cy="68" rx="19" ry="25" fill="url(#bal1)" filter="url(#bl)"/>
<circle cx="336" cy="105" r="19.500" fill="url(#bal2)" filter="url(#bl)"/>
<circle cx="366" cy="78" r="15" fill="url(#mag)"/>
<circle cx="352" cy="118" r="14" fill="url(#mag)" opacity="0.7"/>
<circle cx="324.500" cy="45" r="5.200" fill="#ea5cec" filter="url(#bl)"/>
<ellipse cx="15" cy="117" rx="24" ry="20" fill="url(#glow)"/>
<ellipse cx="383" cy="116" rx="12" ry="20" fill="url(#glow)"/>
<ellipse cx="318" cy="146" rx="16" ry="12" fill="url(#glow)" opacity="0.9"/>
<circle cx="191.500" cy="75" r="122.500" fill="none" stroke="url(#ring)" stroke-width="1.800"/>
<circle cx="191.500" cy="75" r="118" fill="url(#cg)"/>
<g filter="url(#bl)" opacity="0.95">
<path d="M63 66l13 3-1 17-14-4z" fill="#e2141c"/><path d="M62 104l22-8 13 17-22 10z" fill="#dc141c"/>
<path d="M333 59l13 6-8 10-12-7z" fill="#e2141c"/>
<path d="M92 56l9 5 2 9-8-5z" fill="#f2b868"/><path d="M36 102l11 3 3 6-11-3z" fill="#f5c070"/>
</g>
<text x="70.500" y="83" font-family="'Liberation Sans','Noto Sans CJK SC',sans-serif" font-weight="bold" font-size="9" fill="#f5b040" transform="rotate(-12 70 80)">¥</text>
<text x="78" y="115" font-family="'Liberation Sans','Noto Sans CJK SC',sans-serif" font-weight="bold" font-size="12" fill="#f5b040" transform="rotate(25 80 110)">¥</text>
<text x="191.500" y="51" text-anchor="middle" font-family="'Liberation Sans','Noto Sans CJK SC',sans-serif" font-weight="bold" font-size="30" fill="#fde0de" letter-spacing="1">全场精选好货</text>
<text x="194.500" y="90" text-anchor="middle" font-family="'Liberation Sans','Noto Sans CJK SC',sans-serif" font-weight="bold" font-size="30" fill="#fde0de" letter-spacing="1">低至1元砍</text>
<text x="191.500" y="120" text-anchor="middle" font-family="'Liberation Sans','Noto Sans CJK SC',sans-serif" font-weight="bold" font-size="13.600" letter-spacing="0.300" fill="#fbc8d4">已有 58564 人砍价成功</text>
</svg>
<div class="abs" style="left:11px;top:193px;width:360px;height:122px;background:#fff;border-radius:10px;box-shadow:0 0 4px rgba(255,255,255,0.5)"></div>
<svg class="abs" style="left:23px;top:208px;overflow:hidden" width="92" height="92" viewBox="0 0 92 92">
<defs><clipPath id="ic"><rect width="92" height="92" rx="4.500"/></clipPath>
<linearGradient id="nib" x1="0" y1="0" x2="1" y2="0.25"><stop offset="0" stop-color="#8f8a80"/><stop offset="0.3" stop-color="#d9d6d0"/><stop offset="0.55" stop-color="#f2f1ee"/><stop offset="0.8" stop-color="#bdbab3"/><stop offset="1" stop-color="#8a877f"/></linearGradient>
<linearGradient id="gold" x1="0" y1="0" x2="1" y2="0"><stop offset="0" stop-color="#b89f6c"/><stop offset="0.5" stop-color="#ead9ae"/><stop offset="1" stop-color="#b39a66"/></linearGradient>
<filter id="ib"><feGaussianBlur stdDeviation="0.45"/></filter></defs>
<g clip-path="url(#ic)"><rect width="92" height="92" fill="#0b0809"/>
<g filter="url(#ib)">
<path d="M16.400 3.800C22 10 31 20 37 29c2.500 4 3.500 8 3.800 12L46.500 82H28L19 44c-1-14-2-28-2.600-40.200z" fill="url(#gold)"/>
<path d="M19 43l-6.500 3.500L27.500 83h5z" fill="#cdb888"/>
<path d="M12.500 46.500l-2 3L24 83h4z" fill="#9c8656"/>
<path d="M22 18c5 6 11 14 13.500 20c1.500 4 2 8 2.500 12l5 32H31L23 48c-1-10-1.500-20-1-30z" fill="url(#nib)"/>
<circle cx="29.800" cy="41.500" r="1.400" fill="#1a1a1a"/>
<path d="M29.800 41.500L21.500 14" stroke="#8c8980" stroke-width="0.500" fill="none"/>
</g>
<rect x="67" y="0" width="25" height="13.700" fill="#e11b3c"/>
<rect x="71" y="3" width="17" height="3" fill="#f08a9a"/><rect x="70" y="8" width="19" height="3" fill="#f6b0ba"/>
<rect x="0" y="82.500" width="92" height="9.500" fill="#d81a3a"/>
<rect x="43" y="80" width="33" height="3.500" fill="#eec0c0"/><rect x="38" y="86.500" width="36" height="3" fill="#ee8090"/>
<rect x="77" y="78" width="9" height="12" fill="#b4b2b2"/>
<rect x="2.500" y="85" width="14" height="2" fill="#f07888"/>
<text x="50.500" y="44" font-family="'Liberation Serif',serif" font-size="6" fill="#b4b4b4" textLength="22">CUSTOM</text>
<text x="73" y="44" font-family="'Liberation Serif',serif" font-size="3.500" fill="#8c8c8c" textLength="13">URUSHI</text>
<rect x="62" y="51" width="14" height="1" fill="#5c5c5c"/>
</g></svg>
<div class="abs" style="left:128px;top:211px;width:232px;font-size:14px;line-height:20.500px;color:#333;white-space:nowrap">日本进口pilot百乐贵客钢笔 硬橡胶生<br>漆18k金笔fkv-88sr莳绘30号金尖限…</div>
<div class="abs t" style="left:128px;top:254px;line-height:22px;font-size:12px;color:#e9826c">最低可砍至¥<span style="font-size:16.500px;color:#e58a7c">100</span></div>
<div class="abs t" style="left:128px;top:281px;line-height:18px;font-size:12px;color:#a2a2a2">单买 ¥6860.00</div>
<div class="abs t" style="left:272px;top:266px;width:88px;height:31px;border-radius:4px;background:linear-gradient(90deg,#f5592c,#ef3f30);color:#fff;font-weight:bold;font-size:14px;line-height:31px;text-align:center;box-shadow:0 1px 3px rgba(240,80,40,0.4)">发起砍价</div>
<div class="abs t" style="left:0;width:382px;text-align:center;top:331px;line-height:18px;font-size:14px;color:#fff;font-weight:bold">我可是有底线的 ~</div>
<div class="abs" style="left:8px;top:734.500px;width:380px;height:73.500px;border-radius:8px 0 0 8px;background:#49383e"></div>
<span class="abs" style="left:31px;top:758px"><svg width="18" height="18" viewBox="0 0 18 18" ><line x1="9" y1="0.800" x2="9" y2="5" stroke="#fff" stroke-width="1.900" stroke-linecap="round" opacity="0.35" transform="rotate(0 9 9)"/><line x1="9" y1="0.800" x2="9" y2="5" stroke="#fff" stroke-width="1.900" stroke-linecap="round" opacity="0.40" transform="rotate(30 9 9)"/><line x1="9" y1="0.800" x2="9" y2="5" stroke="#fff" stroke-width="1.900" stroke-linecap="round" opacity="0.46" transform="rotate(60 9 9)"/><line x1="9" y1="0.800" x2="9" y2="5" stroke="#fff" stroke-width="1.900" stroke-linecap="round" opacity="0.52" transform="rotate(90 9 9)"/><line x1="9" y1="0.800" x2="9" y2="5" stroke="#fff" stroke-width="1.900" stroke-linecap="round" opacity="0.57" transform="rotate(120 9 9)"/><line x1="9" y1="0.800" x2="9" y2="5" stroke="#fff" stroke-width="1.900" stroke-linecap="round" opacity="0.62" transform="rotate(150 9 9)"/><line x1="9" y1="0.800" x2="9" y2="5" stroke="#fff" stroke-width="1.900" stroke-linecap="round" opacity="0.68" transform="rotate(180 9 9)"/><line x1="9" y1="0.800" x2="9" y2="5" stroke="#fff" stroke-width="1.900" stroke-linecap="round" opacity="0.73" transform="rotate(210 9 9)"/><line x1="9" y1="0.800" x2="9" y2="5" stroke="#fff" stroke-width="1.900" stroke-linecap="round" opacity="0.79" transform="rotate(240 9 9)"/><line x1="9" y1="0.800" x2="9" y2="5" stroke="#fff" stroke-width="1.900" stroke-linecap="round" opacity="0.84" transform="rotate(270 9 9)"/><line x1="9" y1="0.800" x2="9" y2="5" stroke="#fff" stroke-width="1.900" stroke-linecap="round" opacity="0.90" transform="rotate(300 9 9)"/><line x1="9" y1="0.800" x2="9" y2="5" stroke="#fff" stroke-width="1.900" stroke-linecap="round" opacity="0.95" transform="rotate(330 9 9)"/></svg></span>
<span class="abs t" style="left:55px;top:760px;font-size:13.800px;color:#f2f0f0">正在下载第(26/28)个插件...</span>
<span class="abs" style="left:362px;top:763px"><svg width="13" height="8" viewBox="0 0 13 8" ><path d="M0.800 0.800l5.700 5.700 5.700-5.700" fill="none" stroke="#dcd6d8" stroke-width="1.300"/></svg></span></div></div>
</div>
<div id="status" class="abs">
<div class="abs" style="left:9px;top:-23px;width:431px;height:23px;background:#000"></div>
<span class="abs" style="left:28px;top:5px"><svg width="14" height="14" viewBox="0 0 14 14" ><circle cx="7" cy="7" r="6.400" fill="none" stroke="#c4c4c0" stroke-width="1.200"/><circle cx="7" cy="5.300" r="2.300" fill="#c4c4c0"/><path d="M2.800 11.500a4.200 4.200 0 018.400 0a6 6 0 01-8.400 0z" fill="#c4c4c0"/></svg></span>
<span class="abs t" style="left:49px;top:5px;font-size:13px;color:#e8e8e4">1735031199@qq.com</span>
<span class="abs" style="left:233px;top:6px"><svg width="14" height="12" viewBox="0 0 14 12" ><path d="M4.500 1.500h9M4.500 6h9M4.500 10.500h9" stroke="#d0d0cc" stroke-width="1.200"/><path d="M0.500 0.500h2v2h-2zM0.500 5h2v2h-2zM0.500 9.500h2v2h-2z" fill="none" stroke="#d0d0cc" stroke-width="0.900"/></svg></span>
<span class="abs" style="left:259px;top:6px"><svg width="14" height="12" viewBox="0 0 14 12" ><rect x="0.600" y="0.600" width="12.800" height="10.800" fill="none" stroke="#d0d0cc" stroke-width="1.100"/><path d="M3 3.500l2.500 2.300L3 8.100M7 8.500h3.500" fill="none" stroke="#d0d0cc" stroke-width="1.100"/></svg></span>
<span class="abs t" style="left:1104px;top:5px;font-size:12.300px;color:#e8e8e4">语法提示库</span>
<span class="abs t" style="left:1190px;top:5px;font-size:12.300px;color:#e8e8e4">行:21</span>
<span class="abs t" style="left:1229px;top:5px;font-size:12.300px;color:#e8e8e4">列:28</span>
<span class="abs t" style="left:1284px;top:5px;font-size:12.300px;color:#e8e8e4">UTF-8</span>
<span class="abs t" style="left:1344px;top:5px;font-size:12.300px;color:#e8e8e4">JavaScript</span>
<span class="abs" style="left:1421px;top:7px"><svg width="15" height="14" viewBox="0 0 15 14" ><circle cx="7" cy="7" r="6.500" fill="#e6e6e2"/><path d="M4.500 3.500v4.500a2.500 2.500 0 005 0v-4.500" fill="none" stroke="#555653" stroke-width="1.600"/><path d="M10 11l4 2.500" stroke="#e6e6e2" stroke-width="2.500"/></svg></span>
<span class="abs" style="left:1449px;top:5px"><svg width="17" height="15" viewBox="0 0 17 15" ><circle cx="7" cy="8.500" r="6.300" fill="#e6e6e2"/><path d="M7 5v6M4.500 8.800l2.500 2.500 2.500-2.500" fill="none" stroke="#555653" stroke-width="1.500"/><circle cx="12.800" cy="3.600" r="2.400" fill="#e8562a"/></svg></span>
<span class="abs" style="left:1479.500px;top:5.500px"><svg width="13" height="14" viewBox="0 0 13 14" ><path d="M6.500 0.500c3 0 4.300 2.300 4.300 5v3.300l1.700 2.200h-12l1.700-2.200v-3.300c0-2.700 1.300-5 4.300-5z" fill="#38b060"/><path d="M4.800 12a1.800 1.800 0 003.400 0z" fill="#38b060"/></svg></span>
</div>
<div class="abs" style="left:0;top:779px;width:1134px;height:2px;background:#1f201c"></div>
<div class="abs" style="left:365px;top:60px;width:1px;height:720px;background:#1d1e1a"></div>
<div id="wms" class="abs" style="left:0;top:0;width:1519px;height:1007px;overflow:hidden;pointer-events:none"><div class="wm" style="left:1166.5px;top:-88px"><span>v</span><span>i</span><span>p</span><span class="d">.</span><span>9</span><span>f</span><span>y</span><span>m</span><span class="d">.</span><span>c</span><span>o</span><span>m</span></div>
<div class="wm" style="left:1471.5px;top:217px"><span>v</span><span>i</span><span>p</span><span class="d">.</span><span>9</span><span>f</span><span>y</span><span>m</span><span class="d">.</span><span>c</span><span>o</span><span>m</span></div>
<div class="wm" style="left:1024.5px;top:53px"><span>v</span><span>i</span><span>p</span><span class="d">.</span><span>9</span><span>f</span><span>y</span><span>m</span><span class="d">.</span><span>c</span><span>o</span><span>m</span></div>
<div class="wm" style="left:1329.5px;top:358px"><span>v</span><span>i</span><span>p</span><span class="d">.</span><span>9</span><span>f</span><span>y</span><span>m</span><span class="d">.</span><span>c</span><span>o</span><span>m</span></div>
<div class="wm" style="left:577.5px;top:-111px"><span>v</span><span>i</span><span>p</span><span class="d">.</span><span>9</span><span>f</span><span>y</span><span>m</span><span class="d">.</span><span>c</span><span>o</span><span>m</span></div>
<div class="wm" style="left:882.5px;top:194px"><span>v</span><span>i</span><span>p</span><span class="d">.</span><span>9</span><span>f</span><span>y</span><span>m</span><span class="d">.</span><span>c</span><span>o</span><span>m</span></div>
<div class="wm" style="left:1187.5px;top:499px"><span>v</span><span>i</span><span>p</span><span class="d">.</span><span>9</span><span>f</span><span>y</span><span>m</span><span class="d">.</span><span>c</span><span>o</span><span>m</span></div>
<div class="wm" style="left:1492.5px;top:804px"><span>v</span><span>i</span><span>p</span><span class="d">.</span><span>9</span><span>f</span><span>y</span><span>m</span><span class="d">.</span><span>c</span><span>o</span><span>m</span></div>
<div class="wm" style="left:435.5px;top:30px"><span>v</span><span>i</span><span>p</span><span class="d">.</span><span>9</span><span>f</span><span>y</span><span>m</span><span class="d">.</span><span>c</span><span>o</span><span>m</span></div>
<div class="wm" style="left:740.5px;top:335px"><span>v</span><span>i</span><span>p</span><span class="d">.</span><span>9</span><span>f</span><span>y</span><span>m</span><span class="d">.</span><span>c</span><span>o</span><span>m</span></div>
<div class="wm" style="left:1045.5px;top:640px"><span>v</span><span>i</span><span>p</span><span class="d">.</span><span>9</span><span>f</span><span>y</span><span>m</span><span class="d">.</span><span>c</span><span>o</span><span>m</span></div>
<div class="wm" style="left:1350.5px;top:945px"><span>v</span><span>i</span><span>p</span><span class="d">.</span><span>9</span><span>f</span><span>y</span><span>m</span><span class="d">.</span><span>c</span><span>o</span><span>m</span></div>
<div class="wm" style="left:-11.5px;top:-134px"><span>v</span><span>i</span><span>p</span><span class="d">.</span><span>9</span><span>f</span><span>y</span><span>m</span><span class="d">.</span><span>c</span><span>o</span><span>m</span></div>
<div class="wm" style="left:293.5px;top:171px"><span>v</span><span>i</span><span>p</span><span class="d">.</span><span>9</span><span>f</span><span>y</span><span>m</span><span class="d">.</span><span>c</span><span>o</span><span>m</span></div>
<div class="wm" style="left:598.5px;top:476px"><span>v</span><span>i</span><span>p</span><span class="d">.</span><span>9</span><span>f</span><span>y</span><span>m</span><span class="d">.</span><span>c</span><span>o</span><span>m</span></div>
<div class="wm" style="left:903.5px;top:781px"><span>v</span><span>i</span><span>p</span><span class="d">.</span><span>9</span><span>f</span><span>y</span><span>m</span><span class="d">.</span><span>c</span><span>o</span><span>m</span></div>
<div class="wm" style="left:-153.5px;top:7px"><span>v</span><span>i</span><span>p</span><span class="d">.</span><span>9</span><span>f</span><span>y</span><span>m</span><span class="d">.</span><span>c</span><span>o</span><span>m</span></div>
<div class="wm" style="left:151.5px;top:312px"><span>v</span><span>i</span><span>p</span><span class="d">.</span><span>9</span><span>f</span><span>y</span><span>m</span><span class="d">.</span><span>c</span><span>o</span><span>m</span></div>
<div class="wm" style="left:456.5px;top:617px"><span>v</span><span>i</span><span>p</span><span class="d">.</span><span>9</span><span>f</span><span>y</span><span>m</span><span class="d">.</span><span>c</span><span>o</span><span>m</span></div>
<div class="wm" style="left:761.5px;top:922px"><span>v</span><span>i</span><span>p</span><span class="d">.</span><span>9</span><span>f</span><span>y</span><span>m</span><span class="d">.</span><span>c</span><span>o</span><span>m</span></div>
<div class="wm" style="left:9.5px;top:453px"><span>v</span><span>i</span><span>p</span><span class="d">.</span><span>9</span><span>f</span><span>y</span><span>m</span><span class="d">.</span><span>c</span><span>o</span><span>m</span></div>
<div class="wm" style="left:314.5px;top:758px"><span>v</span><span>i</span><span>p</span><span class="d">.</span><span>9</span><span>f</span><span>y</span><span>m</span><span class="d">.</span><span>c</span><span>o</span><span>m</span></div>
<div class="wm" style="left:-132.5px;top:594px"><span>v</span><span>i</span><span>p</span><span class="d">.</span><span>9</span><span>f</span><span>y</span><span>m</span><span class="d">.</span><span>c</span><span>o</span><span>m</span></div>
<div class="wm" style="left:172.5px;top:899px"><span>v</span><span>i</span><span>p</span><span class="d">.</span><span>9</span><span>f</span><span>y</span><span>m</span><span class="d">.</span><span>c</span><span>o</span><span>m</span></div>
<div class="wm2" style="left:681px;top:536px">u6ki.me</div></div>
<div class="abs" style="left:0;top:1005px;width:1519px;height:2px;background:#2a2c30"></div>
<div class="abs" style="left:0;top:0;width:1519px;height:1px;background:#6f767c"></div>
<div class="abs" style="left:0;top:0;width:1px;height:1007px;background:#a4acb4"></div>
<div class="abs" style="left:1518px;top:0;width:1px;height:1007px;background:#4a6a8c"></div>
</body>
</html>
